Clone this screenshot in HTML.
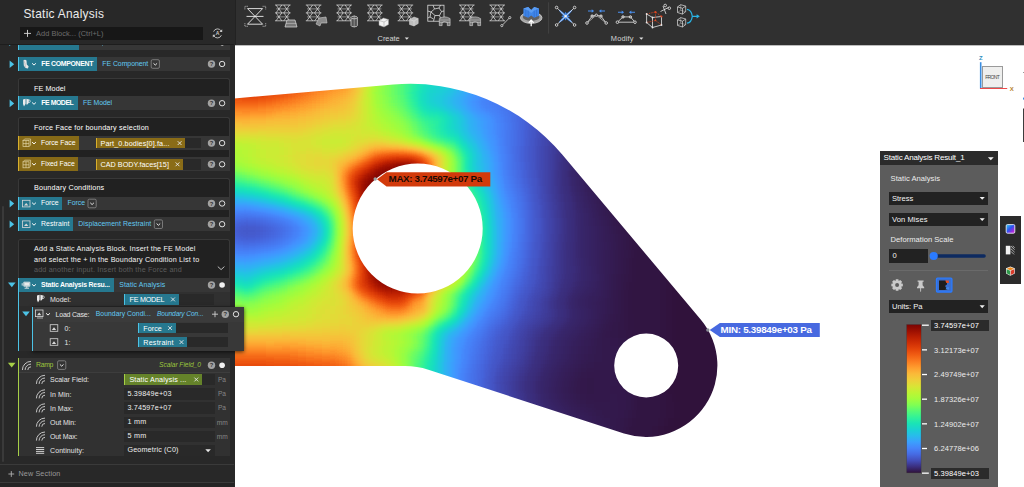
<!DOCTYPE html>
<html><head><meta charset="utf-8"><title>Static Analysis</title>
<style>
html,body{margin:0;padding:0;}
body{width:1024px;height:487px;overflow:hidden;background:#fff;position:relative;font-family:"Liberation Sans",sans-serif;}
.b{position:absolute;box-sizing:border-box;}
.t{position:absolute;white-space:nowrap;line-height:1;}
svg{overflow:visible;}
</style></head><body>
<svg class="b" style="left:0.00px;top:0.00px;" width="1024" height="487" viewBox="0 0 1024 487"><defs><filter id="tf" x="214" y="62" width="532" height="398" filterUnits="userSpaceOnUse" color-interpolation-filters="sRGB"><feGaussianBlur stdDeviation="4.5"/><feComponentTransfer><feFuncR type="table" tableValues="0.190 0.190 0.190 0.190 0.195 0.195 0.200 0.204 0.209 0.213 0.217 0.221 0.229 0.232 0.239 0.245 0.251 0.256 0.261 0.267 0.270 0.273 0.276 0.277 0.277 0.275 0.273 0.263 0.249 0.227 0.200 0.179 0.145 0.122 0.104 0.093 0.097 0.120 0.163 0.221 0.290 0.366 0.443 0.533 0.599 0.664 0.726 0.786 0.841 0.891 0.939 0.969 0.990 0.997 0.992 0.975 0.950 0.916 0.874 0.816 0.746 0.664 0.583 0.480"/><feFuncG type="table" tableValues="0.072 0.072 0.072 0.072 0.083 0.083 0.095 0.107 0.118 0.129 0.141 0.152 0.175 0.186 0.208 0.230 0.252 0.274 0.296 0.328 0.349 0.380 0.411 0.441 0.472 0.501 0.530 0.570 0.599 0.639 0.678 0.707 0.754 0.789 0.822 0.859 0.885 0.912 0.936 0.957 0.974 0.987 0.996 0.999 0.996 0.985 0.965 0.936 0.900 0.858 0.804 0.755 0.694 0.621 0.540 0.457 0.377 0.305 0.245 0.185 0.131 0.084 0.049 0.016"/><feFuncB type="table" tableValues="0.232 0.232 0.232 0.232 0.261 0.261 0.290 0.318 0.346 0.373 0.400 0.426 0.476 0.500 0.547 0.591 0.634 0.674 0.712 0.764 0.796 0.840 0.879 0.913 0.942 0.966 0.985 0.998 0.998 0.989 0.968 0.948 0.905 0.866 0.824 0.772 0.733 0.687 0.631 0.569 0.503 0.437 0.373 0.306 0.260 0.224 0.206 0.203 0.209 0.219 0.227 0.227 0.210 0.183 0.149 0.113 0.079 0.051 0.033 0.018 0.009 0.004 0.005 0.011"/><feFuncA type="linear" slope="0" intercept="1"/></feComponentTransfer></filter><clipPath id="cp"><path clip-rule="evenodd" d="M226 99.2L393.3 84.6A198.4 198.4 0 0 1 562.2 154.5L700.7 319.5A71.5 71.5 0 0 1 624 433.5L428.4 369.7Q417 366 405 366L226 366ZM482.7 228.5A65 65 0 1 0 352.7 228.5A65 65 0 1 0 482.7 228.5ZM678.2 365.5A32 32 0 1 0 614.2 365.5A32 32 0 1 0 678.2 365.5Z"/></clipPath></defs><g clip-path="url(#cp)"><g filter="url(#tf)"><path fill="#030303" d="M738 434h8v8h-8z"/><path fill="#040404" d="M738 146h8v8h-8zM738 154h8v8h-8zM738 162h8v8h-8zM738 170h8v8h-8zM738 194h8v8h-8zM738 218h8v8h-8zM738 226h8v8h-8zM738 250h8v8h-8zM738 282h8v8h-8zM738 314h8v8h-8zM738 338h8v8h-8zM738 346h8v8h-8zM738 362h8v8h-8zM738 370h8v8h-8zM738 378h8v8h-8zM738 394h8v8h-8zM738 402h8v8h-8zM738 410h8v8h-8zM738 418h8v8h-8zM738 426h8v8h-8zM738 442h8v8h-8zM738 450h8v8h-8z"/><path fill="#050505" d="M738 138h8v8h-8zM738 178h8v8h-8zM738 186h8v8h-8zM738 202h8v8h-8zM738 210h8v8h-8zM738 234h8v8h-8zM738 242h8v8h-8zM738 258h8v8h-8zM738 266h8v8h-8zM738 274h8v8h-8zM738 290h8v8h-8zM738 298h8v8h-8zM738 306h8v8h-8zM738 322h8v8h-8zM738 330h8v8h-8zM738 354h8v8h-8zM738 386h8v8h-8z"/><path fill="#070707" d="M738 130h8v8h-8zM730 146h8v8h-8zM730 154h8v8h-8zM730 162h8v8h-8zM730 170h8v8h-8zM730 178h8v8h-8zM730 186h8v8h-8zM730 194h8v8h-8zM730 202h8v8h-8zM730 210h8v8h-8zM730 218h8v8h-8zM730 226h8v8h-8zM730 234h8v8h-8zM730 242h8v8h-8zM730 250h8v8h-8zM730 258h8v8h-8zM730 266h8v8h-8zM730 274h8v8h-8zM730 282h8v8h-8zM730 290h8v8h-8zM730 298h8v8h-8zM730 306h8v8h-8zM730 314h8v8h-8zM730 322h8v8h-8zM730 330h8v8h-8zM730 338h8v8h-8zM730 346h8v8h-8zM730 354h8v8h-8zM730 362h8v8h-8zM730 370h8v8h-8zM730 378h8v8h-8zM730 386h8v8h-8zM730 394h8v8h-8zM730 418h8v8h-8zM730 426h8v8h-8zM706 434h16v8h-16zM730 434h8v8h-8zM730 442h8v8h-8z"/><path fill="#080808" d="M730 138h8v8h-8zM706 146h24v8h-24zM698 154h32v8h-32zM698 162h32v8h-32zM698 170h32v8h-32zM706 178h24v8h-24zM714 186h16v8h-16zM714 194h16v8h-16zM706 202h24v8h-24zM706 210h24v8h-24zM706 218h24v8h-24zM706 226h24v8h-24zM706 234h24v8h-24zM706 242h24v8h-24zM706 250h24v8h-24zM706 258h24v8h-24zM706 266h24v8h-24zM706 274h24v8h-24zM706 282h24v8h-24zM706 290h24v8h-24zM706 298h24v8h-24zM706 306h24v8h-24zM706 314h24v8h-24zM706 322h24v8h-24zM706 330h24v8h-24zM706 338h24v8h-24zM706 346h24v8h-24zM706 354h24v8h-24zM706 362h24v8h-24zM706 370h24v8h-24zM706 378h24v8h-24zM706 386h24v8h-24zM714 394h16v8h-16zM722 402h16v8h-16zM722 410h16v8h-16zM706 418h24v8h-24zM698 426h32v8h-32zM690 434h16v8h-16zM722 434h8v8h-8zM698 442h32v8h-32zM730 450h8v8h-8z"/><path fill="#090909" d="M738 122h8v8h-8zM722 138h8v8h-8zM698 146h8v8h-8zM690 154h8v8h-8zM690 162h8v8h-8zM690 170h8v8h-8zM698 178h8v8h-8zM698 186h16v8h-16zM698 194h16v8h-16zM698 202h8v8h-8zM698 210h8v8h-8zM698 218h8v8h-8zM698 226h8v8h-8zM698 234h8v8h-8zM698 242h8v8h-8zM698 250h8v8h-8zM698 258h8v8h-8zM698 266h8v8h-8zM698 274h8v8h-8zM698 282h8v8h-8zM698 290h8v8h-8zM698 298h8v8h-8zM698 306h8v8h-8zM698 314h8v8h-8zM698 322h8v8h-8zM698 330h8v8h-8zM698 338h8v8h-8zM698 346h8v8h-8zM698 354h8v8h-8zM698 362h8v8h-8zM698 370h8v8h-8zM698 378h8v8h-8zM698 386h8v8h-8zM698 394h16v8h-16zM698 402h24v8h-24zM698 410h24v8h-24zM698 418h8v8h-8zM690 426h8v8h-8zM690 442h8v8h-8zM706 450h24v8h-24z"/><path fill="#0a0a0a" d="M730 130h8v8h-8zM706 138h16v8h-16zM690 146h8v8h-8zM682 154h8v8h-8zM682 162h8v8h-8zM690 178h8v8h-8zM690 186h8v8h-8zM690 194h8v8h-8zM690 202h8v8h-8zM690 210h8v8h-8zM690 218h8v8h-8zM690 226h8v8h-8zM690 234h8v8h-8zM690 242h8v8h-8zM690 250h8v8h-8zM690 258h8v8h-8zM690 266h8v8h-8zM690 274h8v8h-8zM690 282h8v8h-8zM690 290h8v8h-8zM690 298h8v8h-8zM690 306h8v8h-8zM690 314h8v8h-8zM690 322h8v8h-8zM690 330h8v8h-8zM690 338h8v8h-8zM690 346h8v8h-8zM690 354h8v8h-8zM690 362h8v8h-8zM690 370h8v8h-8zM690 378h8v8h-8zM690 386h8v8h-8zM690 394h8v8h-8zM690 402h8v8h-8zM690 410h8v8h-8zM690 418h8v8h-8zM682 426h8v8h-8zM682 434h8v8h-8zM682 442h8v8h-8zM698 450h8v8h-8z"/><path fill="#0b0b0b" d="M722 130h8v8h-8zM698 138h8v8h-8zM682 146h8v8h-8zM682 170h8v8h-8zM682 178h8v8h-8zM682 186h8v8h-8zM682 194h8v8h-8zM682 202h8v8h-8zM682 210h8v8h-8zM682 218h8v8h-8zM682 226h8v8h-8zM682 234h8v8h-8zM682 242h8v8h-8zM682 250h8v8h-8zM682 258h8v8h-8zM682 266h8v8h-8zM682 274h8v8h-8zM682 282h8v8h-8zM682 290h8v8h-8zM682 298h8v8h-8zM682 306h8v8h-8zM682 314h8v8h-8zM682 322h8v8h-8zM682 330h8v8h-8zM682 338h8v8h-8zM682 346h8v8h-8zM682 354h8v8h-8zM682 362h8v8h-8zM682 370h8v8h-8zM682 378h8v8h-8zM682 386h8v8h-8zM682 394h8v8h-8zM682 402h8v8h-8zM682 410h8v8h-8zM682 418h8v8h-8zM674 426h8v8h-8zM674 434h8v8h-8zM674 442h8v8h-8zM690 450h8v8h-8z"/><path fill="#0c0c0c" d="M738 114h8v8h-8zM730 122h8v8h-8zM714 130h8v8h-8zM690 138h8v8h-8zM674 146h8v8h-8zM674 154h8v8h-8zM674 162h8v8h-8zM674 170h8v8h-8zM674 210h8v8h-8zM674 218h8v8h-8zM674 226h8v8h-8zM674 234h8v8h-8zM674 242h8v8h-8zM674 250h8v8h-8zM674 258h8v8h-8zM674 266h8v8h-8zM674 274h8v8h-8zM674 282h8v8h-8zM674 290h8v8h-8zM674 298h8v8h-8zM674 306h8v8h-8zM674 314h8v8h-8zM674 322h8v8h-8zM674 330h8v8h-8zM674 338h8v8h-8zM674 346h8v8h-8zM674 354h8v8h-8zM674 362h8v8h-8zM674 370h8v8h-8zM674 378h8v8h-8zM674 386h8v8h-8zM674 394h8v8h-8zM674 418h8v8h-8zM666 426h8v8h-8zM666 434h8v8h-8zM666 442h8v8h-8z"/><path fill="#0d0d0d" d="M722 122h8v8h-8zM706 130h8v8h-8zM682 138h8v8h-8zM666 154h8v8h-8zM666 162h8v8h-8zM674 178h8v8h-8zM674 186h8v8h-8zM674 194h8v8h-8zM674 202h8v8h-8zM666 354h8v8h-8zM666 362h8v8h-8zM666 370h8v8h-8zM666 378h8v8h-8zM666 386h8v8h-8zM674 402h8v8h-8zM674 410h8v8h-8zM666 418h8v8h-8zM658 434h8v8h-8zM682 450h8v8h-8z"/><path fill="#0e0e0e" d="M738 106h8v8h-8zM730 114h8v8h-8zM698 130h8v8h-8zM674 138h8v8h-8zM666 146h8v8h-8zM666 170h8v8h-8zM666 178h8v8h-8zM666 186h8v8h-8zM666 194h8v8h-8zM666 202h8v8h-8zM666 210h8v8h-8zM666 218h8v8h-8zM666 226h8v8h-8zM666 234h8v8h-8zM666 242h8v8h-8zM666 250h8v8h-8zM666 258h8v8h-8zM666 266h8v8h-8zM666 274h8v8h-8zM666 282h8v8h-8zM666 290h8v8h-8zM666 298h8v8h-8zM666 306h8v8h-8zM666 314h8v8h-8zM666 322h8v8h-8zM666 330h8v8h-8zM666 338h8v8h-8zM666 346h8v8h-8zM666 394h8v8h-8zM666 402h8v8h-8zM666 410h8v8h-8zM658 426h8v8h-8zM658 442h8v8h-8zM674 450h8v8h-8z"/><path fill="#0f0f0f" d="M714 122h8v8h-8zM690 130h8v8h-8zM658 154h8v8h-8zM658 162h8v8h-8zM658 170h8v8h-8zM658 218h8v8h-8zM658 226h8v8h-8zM658 234h8v8h-8zM658 242h8v8h-8zM658 250h8v8h-8zM658 258h8v8h-8zM658 266h8v8h-8zM658 274h8v8h-8zM658 282h8v8h-8zM658 290h8v8h-8zM658 298h8v8h-8zM658 306h8v8h-8zM658 314h8v8h-8zM658 322h8v8h-8zM658 330h8v8h-8zM658 338h8v8h-8zM658 346h8v8h-8zM658 354h8v8h-8zM658 362h8v8h-8zM658 370h8v8h-8zM658 378h8v8h-8zM658 386h8v8h-8zM658 394h8v8h-8zM658 402h8v8h-8zM658 410h8v8h-8zM658 418h8v8h-8zM650 426h8v8h-8zM650 434h8v8h-8zM650 442h8v8h-8zM666 450h8v8h-8z"/><path fill="#101010" d="M722 114h8v8h-8zM706 122h8v8h-8zM682 130h8v8h-8zM666 138h8v8h-8zM658 146h8v8h-8zM650 154h8v8h-8zM650 162h8v8h-8zM658 178h8v8h-8zM658 186h8v8h-8zM658 194h8v8h-8zM658 202h8v8h-8zM658 210h8v8h-8zM650 354h8v8h-8zM650 362h8v8h-8zM650 378h8v8h-8zM650 386h8v8h-8zM650 418h8v8h-8zM658 450h8v8h-8z"/><path fill="#111111" d="M738 98h8v8h-8zM730 106h8v8h-8zM714 114h8v8h-8zM698 122h8v8h-8zM674 130h8v8h-8zM658 138h8v8h-8zM650 146h8v8h-8zM642 154h8v8h-8zM634 162h16v8h-16zM634 170h24v8h-24zM650 178h8v8h-8zM650 186h8v8h-8zM650 194h8v8h-8zM650 202h8v8h-8zM650 210h8v8h-8zM650 218h8v8h-8zM650 226h8v8h-8zM650 234h8v8h-8zM650 242h8v8h-8zM650 250h8v8h-8zM650 258h8v8h-8zM650 266h8v8h-8zM650 274h8v8h-8zM650 282h8v8h-8zM650 290h8v8h-8zM650 298h8v8h-8zM650 306h8v8h-8zM650 314h8v8h-8zM650 322h8v8h-8zM650 330h8v8h-8zM650 338h8v8h-8zM650 346h8v8h-8zM650 370h8v8h-8zM650 394h8v8h-8zM650 402h8v8h-8zM650 410h8v8h-8zM642 426h8v8h-8zM642 434h8v8h-8z"/><path fill="#121212" d="M706 114h8v8h-8zM690 122h8v8h-8zM666 130h8v8h-8zM642 146h8v8h-8zM634 154h8v8h-8zM626 162h8v8h-8zM626 170h8v8h-8zM626 178h24v8h-24zM626 186h24v8h-24zM634 194h16v8h-16zM642 202h8v8h-8zM642 210h8v8h-8zM642 218h8v8h-8zM642 226h8v8h-8zM642 234h8v8h-8zM642 242h8v8h-8zM642 250h8v8h-8zM642 258h8v8h-8zM642 266h8v8h-8zM642 274h8v8h-8zM642 282h8v8h-8zM642 290h8v8h-8zM642 298h8v8h-8zM642 306h8v8h-8zM642 314h8v8h-8zM642 322h8v8h-8zM642 330h8v8h-8zM642 418h8v8h-8zM642 442h8v8h-8zM650 450h8v8h-8z"/><path fill="#131313" d="M722 106h8v8h-8zM682 122h8v8h-8zM650 138h8v8h-8zM634 146h8v8h-8zM626 154h8v8h-8zM618 162h8v8h-8zM618 170h8v8h-8zM618 178h8v8h-8zM618 186h8v8h-8zM626 194h8v8h-8zM634 202h8v8h-8zM634 210h8v8h-8zM634 290h8v8h-8zM634 298h8v8h-8zM634 306h8v8h-8zM642 338h8v8h-8zM642 346h8v8h-8zM642 354h8v8h-8zM642 362h8v8h-8zM642 370h8v8h-8zM642 378h8v8h-8zM642 386h8v8h-8zM642 394h8v8h-8zM642 402h8v8h-8zM642 410h8v8h-8zM634 426h8v8h-8zM634 434h8v8h-8z"/><path fill="#141414" d="M738 90h8v8h-8zM730 98h8v8h-8zM714 106h8v8h-8zM698 114h8v8h-8zM674 122h8v8h-8zM658 130h8v8h-8zM642 138h8v8h-8zM618 154h8v8h-8zM610 170h8v8h-8zM610 178h8v8h-8zM618 194h8v8h-8zM626 202h8v8h-8zM626 210h8v8h-8zM634 218h8v8h-8zM634 226h8v8h-8zM634 234h8v8h-8zM634 242h8v8h-8zM634 250h8v8h-8zM634 258h8v8h-8zM634 266h8v8h-8zM634 274h8v8h-8zM634 282h8v8h-8zM634 314h8v8h-8zM634 322h8v8h-8zM634 330h8v8h-8zM634 418h8v8h-8z"/><path fill="#151515" d="M690 114h8v8h-8zM666 122h8v8h-8zM650 130h8v8h-8zM634 138h8v8h-8zM626 146h8v8h-8zM610 162h8v8h-8zM610 186h8v8h-8zM618 202h8v8h-8zM626 218h8v8h-8zM626 282h8v8h-8zM626 290h8v8h-8zM626 298h8v8h-8zM626 306h8v8h-8zM626 314h8v8h-8zM626 322h8v8h-8zM634 338h8v8h-8zM634 346h8v8h-8zM634 354h8v8h-8zM634 378h8v8h-8zM634 386h8v8h-8zM634 394h8v8h-8zM634 402h8v8h-8zM634 410h8v8h-8zM626 426h8v8h-8zM634 442h8v8h-8zM642 450h8v8h-8z"/><path fill="#161616" d="M722 98h8v8h-8zM706 106h8v8h-8zM682 114h8v8h-8zM642 130h8v8h-8zM618 146h8v8h-8zM610 154h8v8h-8zM610 194h8v8h-8zM618 210h8v8h-8zM626 226h8v8h-8zM626 234h8v8h-8zM626 242h8v8h-8zM626 258h8v8h-8zM626 266h8v8h-8zM626 274h8v8h-8zM626 330h8v8h-8zM634 362h8v8h-8zM634 370h8v8h-8zM626 418h8v8h-8zM626 434h8v8h-8z"/><path fill="#171717" d="M730 90h8v8h-8zM714 98h8v8h-8zM698 106h8v8h-8zM674 114h8v8h-8zM658 122h8v8h-8zM626 138h8v8h-8zM602 170h8v8h-8zM602 178h8v8h-8zM618 218h8v8h-8zM626 250h8v8h-8zM618 290h8v8h-8zM618 298h8v8h-8zM618 306h8v8h-8zM618 314h8v8h-8zM618 322h8v8h-8zM618 330h8v8h-8zM626 338h8v8h-8zM626 410h8v8h-8z"/><path fill="#181818" d="M738 82h8v8h-8zM690 106h8v8h-8zM666 114h8v8h-8zM650 122h8v8h-8zM634 130h8v8h-8zM602 162h8v8h-8zM602 186h8v8h-8zM610 202h8v8h-8zM618 226h8v8h-8zM618 274h8v8h-8zM618 282h8v8h-8zM610 322h8v8h-8zM610 330h8v8h-8zM618 338h8v8h-8zM626 346h8v8h-8zM626 354h8v8h-8zM626 362h8v8h-8zM626 370h8v8h-8zM586 378h8v8h-8zM626 378h8v8h-8zM586 386h8v8h-8zM626 386h8v8h-8zM626 394h8v8h-8zM626 402h8v8h-8zM618 418h8v8h-8zM618 426h8v8h-8zM618 434h8v8h-8zM626 442h8v8h-8zM634 450h8v8h-8z"/><path fill="#191919" d="M722 90h8v8h-8zM706 98h8v8h-8zM682 106h8v8h-8zM618 138h8v8h-8zM610 146h8v8h-8zM602 154h8v8h-8zM602 194h8v8h-8zM610 210h8v8h-8zM618 234h8v8h-8zM618 242h8v8h-8zM618 250h8v8h-8zM618 258h8v8h-8zM618 266h8v8h-8zM610 314h8v8h-8zM602 330h8v8h-8zM610 338h8v8h-8zM618 346h8v8h-8zM618 354h8v8h-8zM618 362h8v8h-8zM586 370h24v8h-24zM618 370h8v8h-8zM578 378h8v8h-8zM594 378h16v8h-16zM618 378h8v8h-8zM578 386h8v8h-8zM594 386h32v8h-32zM586 394h24v8h-24zM618 394h8v8h-8zM618 402h8v8h-8zM618 410h8v8h-8z"/><path fill="#1a1a1a" d="M730 82h8v8h-8zM714 90h8v8h-8zM698 98h8v8h-8zM674 106h8v8h-8zM658 114h8v8h-8zM642 122h8v8h-8zM626 130h8v8h-8zM594 170h8v8h-8zM610 218h8v8h-8zM610 290h8v8h-8zM610 298h8v8h-8zM610 306h8v8h-8zM602 322h8v8h-8zM602 338h8v8h-8zM602 346h16v8h-16zM602 354h16v8h-16zM594 362h24v8h-24zM578 370h8v8h-8zM610 370h8v8h-8zM610 378h8v8h-8zM578 394h8v8h-8zM610 394h8v8h-8zM594 402h24v8h-24zM602 410h16v8h-16zM610 418h8v8h-8zM610 426h8v8h-8z"/><path fill="#1b1b1b" d="M738 74h8v8h-8zM690 98h8v8h-8zM650 114h8v8h-8zM634 122h8v8h-8zM610 138h8v8h-8zM594 162h8v8h-8zM594 178h8v8h-8zM602 202h8v8h-8zM610 226h8v8h-8zM610 274h8v8h-8zM610 282h8v8h-8zM594 338h8v8h-8zM594 346h8v8h-8zM594 354h8v8h-8zM586 362h8v8h-8zM570 378h8v8h-8zM570 386h8v8h-8zM586 402h8v8h-8zM594 410h8v8h-8zM602 418h8v8h-8zM610 434h8v8h-8zM618 442h8v8h-8zM626 450h8v8h-8z"/><path fill="#1c1c1c" d="M722 82h8v8h-8zM706 90h8v8h-8zM666 106h8v8h-8zM618 130h8v8h-8zM602 146h8v8h-8zM594 186h8v8h-8zM602 210h8v8h-8zM610 234h8v8h-8zM610 242h8v8h-8zM610 250h8v8h-8zM610 258h8v8h-8zM610 266h8v8h-8zM602 314h8v8h-8zM594 330h8v8h-8zM586 354h8v8h-8zM578 362h8v8h-8zM570 394h8v8h-8zM578 402h8v8h-8z"/><path fill="#1d1d1d" d="M730 74h8v8h-8zM698 90h8v8h-8zM682 98h8v8h-8zM658 106h8v8h-8zM642 114h8v8h-8zM626 122h8v8h-8zM594 154h8v8h-8zM594 194h8v8h-8zM602 298h8v8h-8zM602 306h8v8h-8zM586 346h8v8h-8zM570 370h8v8h-8zM586 410h8v8h-8zM594 418h8v8h-8zM602 426h8v8h-8z"/><path fill="#1e1e1e" d="M738 66h8v8h-8zM714 82h8v8h-8zM674 98h8v8h-8zM602 138h8v8h-8zM602 218h8v8h-8zM602 290h8v8h-8zM594 322h8v8h-8zM586 338h8v8h-8zM578 354h8v8h-8zM562 386h8v8h-8zM570 402h8v8h-8zM610 442h8v8h-8zM618 450h8v8h-8z"/><path fill="#1f1f1f" d="M722 74h8v8h-8zM706 82h8v8h-8zM690 90h8v8h-8zM666 98h8v8h-8zM650 106h8v8h-8zM634 114h8v8h-8zM618 122h8v8h-8zM610 130h8v8h-8zM594 146h8v8h-8zM586 170h8v8h-8zM586 178h8v8h-8zM594 202h8v8h-8zM602 226h8v8h-8zM602 234h8v8h-8zM602 250h8v8h-8zM602 258h8v8h-8zM602 266h8v8h-8zM602 274h8v8h-8zM602 282h8v8h-8zM586 330h8v8h-8zM578 346h8v8h-8zM570 362h8v8h-8zM562 378h8v8h-8zM562 394h8v8h-8zM578 410h8v8h-8zM586 418h8v8h-8zM594 426h8v8h-8zM602 434h8v8h-8z"/><path fill="#202020" d="M730 66h8v8h-8zM682 90h8v8h-8zM586 162h8v8h-8zM586 186h8v8h-8zM594 210h8v8h-8zM602 242h8v8h-8zM594 298h8v8h-8zM594 306h8v8h-8zM594 314h8v8h-8zM578 338h8v8h-8zM562 370h8v8h-8z"/><path fill="#212121" d="M714 74h8v8h-8zM698 82h8v8h-8zM658 98h8v8h-8zM642 106h8v8h-8zM626 114h8v8h-8zM586 154h8v8h-8zM570 354h8v8h-8zM570 410h8v8h-8z"/><path fill="#222222" d="M722 66h8v8h-8zM690 82h8v8h-8zM674 90h8v8h-8zM634 106h8v8h-8zM610 122h8v8h-8zM602 130h8v8h-8zM594 138h8v8h-8zM586 194h8v8h-8zM594 218h8v8h-8zM594 290h8v8h-8zM586 298h8v8h-8zM586 322h8v8h-8zM578 330h8v8h-8zM570 346h8v8h-8zM562 362h8v8h-8zM554 378h8v8h-8zM554 386h8v8h-8zM562 402h8v8h-8zM578 418h8v8h-8zM586 426h8v8h-8zM594 434h8v8h-8zM602 442h8v8h-8zM610 450h8v8h-8z"/><path fill="#232323" d="M706 74h8v8h-8zM666 90h8v8h-8zM650 98h8v8h-8zM618 114h8v8h-8zM586 146h8v8h-8zM594 226h8v8h-8zM594 234h8v8h-8zM594 242h8v8h-8zM594 250h8v8h-8zM594 258h8v8h-8zM594 266h8v8h-8zM594 282h8v8h-8zM570 338h8v8h-8zM554 394h8v8h-8z"/><path fill="#242424" d="M714 66h8v8h-8zM698 74h8v8h-8zM682 82h8v8h-8zM642 98h8v8h-8zM626 106h8v8h-8zM578 170h8v8h-8zM586 202h8v8h-8zM594 274h8v8h-8zM586 290h8v8h-8zM578 298h8v8h-8zM586 306h8v8h-8zM586 314h8v8h-8zM554 370h8v8h-8z"/><path fill="#252525" d="M674 82h8v8h-8zM658 90h8v8h-8zM602 122h8v8h-8zM594 130h8v8h-8zM578 162h8v8h-8zM578 178h8v8h-8zM578 322h8v8h-8zM562 354h8v8h-8zM554 402h8v8h-8zM562 410h8v8h-8zM570 418h8v8h-8zM578 426h8v8h-8zM586 434h8v8h-8z"/><path fill="#262626" d="M706 66h8v8h-8zM690 74h8v8h-8zM650 90h8v8h-8zM634 98h8v8h-8zM610 114h8v8h-8zM586 138h8v8h-8zM578 154h8v8h-8zM578 186h8v8h-8zM586 210h8v8h-8zM586 218h8v8h-8zM570 330h8v8h-8zM562 346h8v8h-8zM554 362h8v8h-8zM546 386h8v8h-8zM594 442h8v8h-8zM602 450h8v8h-8z"/><path fill="#272727" d="M682 74h8v8h-8zM666 82h8v8h-8zM618 106h8v8h-8zM586 226h8v8h-8zM586 234h8v8h-8zM586 242h8v8h-8zM586 250h8v8h-8zM586 258h8v8h-8zM586 282h8v8h-8zM578 290h8v8h-8zM578 306h8v8h-8zM562 338h8v8h-8zM546 378h8v8h-8zM546 394h8v8h-8z"/><path fill="#282828" d="M698 66h8v8h-8zM658 82h8v8h-8zM642 90h8v8h-8zM626 98h8v8h-8zM602 114h8v8h-8zM594 122h8v8h-8zM578 146h8v8h-8zM578 194h8v8h-8zM586 266h8v8h-8zM586 274h8v8h-8zM578 314h8v8h-8zM546 370h8v8h-8zM562 418h8v8h-8z"/><path fill="#292929" d="M690 66h8v8h-8zM674 74h8v8h-8zM610 106h8v8h-8zM586 130h8v8h-8zM578 202h8v8h-8zM570 298h8v8h-8zM570 322h8v8h-8zM562 330h8v8h-8zM554 354h8v8h-8zM554 410h8v8h-8zM570 426h8v8h-8zM578 434h8v8h-8zM586 442h8v8h-8z"/><path fill="#2a2a2a" d="M666 74h8v8h-8zM650 82h8v8h-8zM634 90h8v8h-8zM570 170h8v8h-8zM554 346h8v8h-8zM546 402h8v8h-8zM594 450h8v8h-8z"/><path fill="#2b2b2b" d="M682 66h8v8h-8zM618 98h8v8h-8zM578 138h8v8h-8zM570 162h8v8h-8zM570 178h8v8h-8zM578 210h8v8h-8zM578 218h8v8h-8zM578 226h8v8h-8zM578 234h8v8h-8zM578 242h8v8h-8zM578 250h8v8h-8zM578 282h8v8h-8zM570 306h8v8h-8zM570 314h8v8h-8zM554 338h8v8h-8zM546 362h8v8h-8zM538 378h8v8h-8zM538 386h8v8h-8z"/><path fill="#2c2c2c" d="M658 74h8v8h-8zM642 82h8v8h-8zM626 90h8v8h-8zM602 106h8v8h-8zM594 114h8v8h-8zM586 122h8v8h-8zM570 154h8v8h-8zM570 186h8v8h-8zM578 258h8v8h-8zM578 266h8v8h-8zM578 274h8v8h-8zM570 290h8v8h-8zM538 394h8v8h-8zM554 418h8v8h-8z"/><path fill="#2d2d2d" d="M674 66h8v8h-8zM610 98h8v8h-8zM562 322h8v8h-8zM554 330h8v8h-8zM546 354h8v8h-8zM538 370h8v8h-8zM546 410h8v8h-8zM562 426h8v8h-8zM570 434h8v8h-8zM578 442h8v8h-8z"/><path fill="#2e2e2e" d="M666 66h8v8h-8zM650 74h8v8h-8zM634 82h8v8h-8zM618 90h8v8h-8zM578 130h8v8h-8zM570 146h8v8h-8zM570 194h8v8h-8zM546 346h8v8h-8zM538 402h8v8h-8zM586 450h8v8h-8z"/><path fill="#2f2f2f" d="M594 106h8v8h-8zM586 114h8v8h-8zM570 202h8v8h-8zM570 282h8v8h-8zM562 298h8v8h-8zM546 338h8v8h-8zM538 362h8v8h-8z"/><path fill="#303030" d="M658 66h8v8h-8zM642 74h8v8h-8zM626 82h8v8h-8zM602 98h8v8h-8zM578 122h8v8h-8zM570 138h8v8h-8zM570 210h8v8h-8zM570 218h8v8h-8zM570 226h8v8h-8zM570 234h8v8h-8zM570 242h8v8h-8zM570 250h8v8h-8zM570 258h8v8h-8zM570 274h8v8h-8zM562 306h8v8h-8zM562 314h8v8h-8zM530 378h8v8h-8zM530 386h8v8h-8z"/><path fill="#313131" d="M610 90h8v8h-8zM562 170h8v8h-8zM570 266h8v8h-8zM562 290h8v8h-8zM554 322h8v8h-8zM546 330h8v8h-8zM538 354h8v8h-8zM530 394h8v8h-8zM546 418h8v8h-8zM554 426h8v8h-8zM562 434h8v8h-8zM570 442h8v8h-8z"/><path fill="#323232" d="M650 66h8v8h-8zM634 74h8v8h-8zM618 82h8v8h-8zM562 162h8v8h-8zM562 178h8v8h-8zM530 370h8v8h-8zM538 410h8v8h-8zM578 450h8v8h-8z"/><path fill="#333333" d="M594 98h8v8h-8zM586 106h8v8h-8zM578 114h8v8h-8zM570 130h8v8h-8zM562 154h8v8h-8zM562 186h8v8h-8zM562 282h8v8h-8zM538 346h8v8h-8zM530 402h8v8h-8z"/><path fill="#343434" d="M642 66h8v8h-8zM626 74h8v8h-8zM602 90h8v8h-8zM562 146h8v8h-8zM562 194h8v8h-8zM554 298h8v8h-8zM538 338h8v8h-8zM530 362h8v8h-8z"/><path fill="#353535" d="M610 82h8v8h-8zM570 122h8v8h-8zM562 202h8v8h-8zM562 210h8v8h-8zM562 242h8v8h-8zM562 250h8v8h-8zM562 258h8v8h-8zM562 266h8v8h-8zM562 274h8v8h-8zM522 378h8v8h-8zM522 386h8v8h-8zM546 426h8v8h-8zM554 434h8v8h-8z"/><path fill="#363636" d="M634 66h8v8h-8zM618 74h8v8h-8zM586 98h8v8h-8zM562 138h8v8h-8zM562 218h8v8h-8zM562 226h8v8h-8zM562 234h8v8h-8zM554 306h8v8h-8zM554 314h8v8h-8zM546 322h8v8h-8zM538 330h8v8h-8zM530 354h8v8h-8zM522 394h8v8h-8zM538 418h8v8h-8zM562 442h8v8h-8zM570 450h8v8h-8z"/><path fill="#373737" d="M594 90h8v8h-8zM578 106h8v8h-8zM554 290h8v8h-8zM522 370h8v8h-8zM530 410h8v8h-8z"/><path fill="#383838" d="M626 66h8v8h-8zM602 82h8v8h-8zM570 114h8v8h-8zM562 130h8v8h-8zM530 346h8v8h-8z"/><path fill="#393939" d="M610 74h8v8h-8zM554 170h8v8h-8zM554 178h8v8h-8zM554 186h8v8h-8zM554 282h8v8h-8zM546 298h8v8h-8zM530 338h8v8h-8zM522 402h8v8h-8z"/><path fill="#3a3a3a" d="M618 66h8v8h-8zM594 82h8v8h-8zM586 90h8v8h-8zM578 98h8v8h-8zM562 122h8v8h-8zM554 154h8v8h-8zM554 162h8v8h-8zM554 194h8v8h-8zM554 274h8v8h-8zM522 362h8v8h-8zM514 378h8v8h-8zM514 386h8v8h-8zM538 426h8v8h-8zM546 434h8v8h-8zM554 442h8v8h-8zM562 450h8v8h-8z"/><path fill="#3b3b3b" d="M570 106h8v8h-8zM554 146h8v8h-8zM554 202h8v8h-8zM554 250h8v8h-8zM554 258h8v8h-8zM554 266h8v8h-8zM546 306h8v8h-8zM546 314h8v8h-8zM538 322h8v8h-8zM530 330h8v8h-8zM530 418h8v8h-8z"/><path fill="#3c3c3c" d="M602 74h8v8h-8zM562 114h8v8h-8zM554 138h8v8h-8zM554 210h8v8h-8zM554 234h8v8h-8zM554 242h8v8h-8zM522 354h8v8h-8zM514 370h8v8h-8zM514 394h8v8h-8zM522 410h8v8h-8z"/><path fill="#3d3d3d" d="M610 66h8v8h-8zM578 90h8v8h-8zM554 130h8v8h-8zM554 218h8v8h-8zM554 226h8v8h-8z"/><path fill="#3e3e3e" d="M594 74h8v8h-8zM586 82h8v8h-8zM570 98h8v8h-8zM522 346h8v8h-8zM514 402h8v8h-8z"/><path fill="#3f3f3f" d="M602 66h8v8h-8zM562 106h8v8h-8zM554 122h8v8h-8zM546 290h8v8h-8zM538 314h8v8h-8zM530 322h8v8h-8zM522 338h8v8h-8zM514 362h8v8h-8zM538 434h8v8h-8zM546 442h8v8h-8zM554 450h8v8h-8z"/><path fill="#404040" d="M546 178h8v8h-8zM546 282h8v8h-8zM522 330h8v8h-8zM506 378h8v8h-8zM506 386h8v8h-8zM522 418h8v8h-8zM530 426h8v8h-8z"/><path fill="#414141" d="M586 74h8v8h-8zM578 82h8v8h-8zM570 90h8v8h-8zM554 114h8v8h-8zM546 146h8v8h-8zM546 154h8v8h-8zM546 162h8v8h-8zM546 170h8v8h-8zM546 186h8v8h-8zM546 194h8v8h-8zM546 266h8v8h-8zM546 274h8v8h-8zM538 298h8v8h-8zM538 306h8v8h-8zM506 394h8v8h-8z"/><path fill="#424242" d="M594 66h8v8h-8zM562 98h8v8h-8zM546 138h8v8h-8zM546 250h8v8h-8zM546 258h8v8h-8zM514 354h8v8h-8zM506 370h8v8h-8zM514 410h8v8h-8z"/><path fill="#434343" d="M554 106h8v8h-8zM546 130h8v8h-8zM546 202h8v8h-8zM546 210h8v8h-8zM546 242h8v8h-8zM514 346h8v8h-8z"/><path fill="#444444" d="M578 74h8v8h-8zM570 82h8v8h-8zM546 122h8v8h-8zM546 218h8v8h-8zM546 226h8v8h-8zM546 234h8v8h-8zM530 314h8v8h-8zM522 322h8v8h-8zM514 338h8v8h-8zM506 362h8v8h-8zM506 402h8v8h-8zM530 434h8v8h-8zM538 442h8v8h-8zM546 450h8v8h-8z"/><path fill="#454545" d="M586 66h8v8h-8zM562 90h8v8h-8zM538 290h8v8h-8zM498 378h8v8h-8zM522 426h8v8h-8z"/><path fill="#464646" d="M554 98h8v8h-8zM546 114h8v8h-8zM530 306h8v8h-8zM514 330h8v8h-8zM498 386h8v8h-8zM514 418h8v8h-8z"/><path fill="#474747" d="M538 146h8v8h-8zM538 154h8v8h-8zM538 162h8v8h-8zM538 170h8v8h-8zM538 282h8v8h-8zM530 298h8v8h-8zM506 354h8v8h-8zM498 370h8v8h-8z"/><path fill="#484848" d="M578 66h8v8h-8zM570 74h8v8h-8zM562 82h8v8h-8zM554 90h8v8h-8zM546 106h8v8h-8zM538 130h8v8h-8zM538 138h8v8h-8zM538 178h8v8h-8zM538 186h8v8h-8zM538 266h8v8h-8zM538 274h8v8h-8zM522 314h8v8h-8zM506 346h8v8h-8zM498 394h8v8h-8zM506 410h8v8h-8z"/><path fill="#494949" d="M538 194h8v8h-8zM538 258h8v8h-8zM530 290h8v8h-8zM514 322h8v8h-8zM498 362h8v8h-8zM530 442h8v8h-8zM538 450h8v8h-8z"/><path fill="#4a4a4a" d="M546 98h8v8h-8zM538 122h8v8h-8zM538 202h8v8h-8zM538 242h8v8h-8zM538 250h8v8h-8zM506 338h8v8h-8zM522 434h8v8h-8z"/><path fill="#4b4b4b" d="M570 66h8v8h-8zM562 74h8v8h-8zM554 82h8v8h-8zM538 114h8v8h-8zM538 210h8v8h-8zM538 218h8v8h-8zM538 226h8v8h-8zM538 234h8v8h-8zM522 306h8v8h-8zM490 378h8v8h-8zM498 402h8v8h-8zM514 426h8v8h-8z"/><path fill="#4c4c4c" d="M546 90h8v8h-8zM538 106h8v8h-8zM530 282h8v8h-8zM522 298h8v8h-8zM506 330h8v8h-8zM498 354h8v8h-8zM490 386h8v8h-8z"/><path fill="#4d4d4d" d="M530 138h8v8h-8zM530 146h8v8h-8zM530 154h8v8h-8zM530 162h8v8h-8zM514 314h8v8h-8zM498 346h8v8h-8zM490 370h8v8h-8zM506 418h8v8h-8z"/><path fill="#4e4e4e" d="M538 98h8v8h-8zM530 130h8v8h-8zM530 170h8v8h-8zM530 274h8v8h-8zM490 394h8v8h-8z"/><path fill="#4f4f4f" d="M562 66h8v8h-8zM554 74h8v8h-8zM546 82h8v8h-8zM530 122h8v8h-8zM530 178h8v8h-8zM242 226h8v8h-8zM530 266h8v8h-8zM522 290h8v8h-8zM506 322h8v8h-8zM498 338h8v8h-8zM490 362h8v8h-8zM498 410h8v8h-8zM522 442h8v8h-8zM530 450h8v8h-8z"/><path fill="#505050" d="M538 90h8v8h-8zM530 114h8v8h-8zM530 186h8v8h-8zM250 226h8v8h-8zM530 258h8v8h-8zM514 306h8v8h-8zM514 434h8v8h-8z"/><path fill="#515151" d="M530 106h8v8h-8zM530 194h8v8h-8zM234 226h8v8h-8zM530 250h8v8h-8zM498 330h8v8h-8zM490 354h8v8h-8zM506 426h8v8h-8z"/><path fill="#525252" d="M554 66h8v8h-8zM546 74h8v8h-8zM530 98h8v8h-8zM530 202h8v8h-8zM530 210h8v8h-8zM258 226h8v8h-8zM530 234h8v8h-8zM530 242h8v8h-8zM522 282h8v8h-8zM514 298h8v8h-8zM490 402h8v8h-8z"/><path fill="#535353" d="M538 82h8v8h-8zM522 146h8v8h-8zM522 154h8v8h-8zM530 218h8v8h-8zM530 226h8v8h-8zM242 234h16v8h-16zM490 346h8v8h-8zM482 378h8v8h-8zM482 386h8v8h-8zM498 418h8v8h-8z"/><path fill="#545454" d="M530 90h8v8h-8zM522 130h8v8h-8zM522 138h8v8h-8zM522 162h8v8h-8zM522 170h8v8h-8zM234 234h8v8h-8zM522 274h8v8h-8zM506 314h8v8h-8zM490 338h8v8h-8zM482 370h8v8h-8zM522 450h8v8h-8z"/><path fill="#555555" d="M522 114h8v8h-8zM522 122h8v8h-8zM522 178h8v8h-8zM242 218h8v8h-8zM266 226h8v8h-8zM258 234h8v8h-8zM514 290h8v8h-8zM498 322h8v8h-8zM482 362h8v8h-8zM482 394h8v8h-8zM514 442h8v8h-8z"/><path fill="#565656" d="M546 66h8v8h-8zM538 74h8v8h-8zM522 98h8v8h-8zM522 106h8v8h-8zM250 218h8v8h-8zM522 266h8v8h-8zM490 330h8v8h-8zM490 410h8v8h-8zM506 434h8v8h-8z"/><path fill="#575757" d="M530 82h8v8h-8zM522 186h8v8h-8zM234 218h8v8h-8zM522 258h8v8h-8zM506 306h8v8h-8zM482 354h8v8h-8z"/><path fill="#585858" d="M522 90h8v8h-8zM522 194h8v8h-8zM258 218h8v8h-8zM226 226h8v8h-8zM274 226h8v8h-8zM266 234h8v8h-8zM522 250h8v8h-8zM514 282h8v8h-8zM482 346h8v8h-8zM498 426h8v8h-8z"/><path fill="#595959" d="M538 66h8v8h-8zM514 146h8v8h-8zM514 154h8v8h-8zM522 202h8v8h-8zM522 242h8v8h-8zM482 338h8v8h-8zM482 402h8v8h-8z"/><path fill="#5a5a5a" d="M530 74h8v8h-8zM522 82h8v8h-8zM514 98h8v8h-8zM514 106h8v8h-8zM514 114h8v8h-8zM514 122h8v8h-8zM514 130h8v8h-8zM514 138h8v8h-8zM514 162h8v8h-8zM522 210h8v8h-8zM226 234h8v8h-8zM522 234h8v8h-8zM506 298h8v8h-8zM498 314h8v8h-8zM490 322h8v8h-8zM474 370h8v8h-8zM474 378h8v8h-8zM474 386h8v8h-8zM490 418h8v8h-8zM514 450h8v8h-8z"/><path fill="#5b5b5b" d="M514 170h8v8h-8zM266 218h8v8h-8zM522 218h8v8h-8zM522 226h8v8h-8zM274 234h8v8h-8zM514 274h8v8h-8zM474 362h8v8h-8zM506 442h8v8h-8z"/><path fill="#5c5c5c" d="M514 90h8v8h-8zM514 178h8v8h-8zM226 218h8v8h-8zM506 290h8v8h-8zM482 330h8v8h-8z"/><path fill="#5d5d5d" d="M530 66h8v8h-8zM522 74h8v8h-8zM282 226h8v8h-8zM242 242h8v8h-8zM514 266h8v8h-8zM474 354h8v8h-8zM474 394h8v8h-8zM482 410h8v8h-8zM498 434h8v8h-8z"/><path fill="#5e5e5e" d="M514 82h8v8h-8zM506 98h8v8h-8zM506 106h8v8h-8zM514 186h8v8h-8zM234 242h8v8h-8zM250 242h8v8h-8zM498 306h8v8h-8zM474 346h8v8h-8z"/><path fill="#5f5f5f" d="M506 90h8v8h-8zM506 114h8v8h-8zM506 130h8v8h-8zM506 138h8v8h-8zM506 146h8v8h-8zM274 218h8v8h-8zM514 258h8v8h-8zM506 282h8v8h-8zM490 314h8v8h-8zM466 370h8v8h-8zM466 378h8v8h-8zM490 426h8v8h-8z"/><path fill="#606060" d="M506 122h8v8h-8zM506 154h8v8h-8zM506 162h8v8h-8zM514 194h8v8h-8zM218 226h8v8h-8zM282 234h8v8h-8zM258 242h8v8h-8zM514 250h8v8h-8zM482 322h8v8h-8zM474 338h8v8h-8zM474 402h8v8h-8zM506 450h8v8h-8z"/><path fill="#616161" d="M522 66h8v8h-8zM514 74h8v8h-8zM498 98h8v8h-8zM506 170h8v8h-8zM514 202h8v8h-8zM218 234h8v8h-8zM498 298h8v8h-8zM466 362h8v8h-8zM466 386h8v8h-8z"/><path fill="#626262" d="M506 82h8v8h-8zM498 90h8v8h-8zM498 106h8v8h-8zM242 210h8v8h-8zM226 242h8v8h-8zM266 242h8v8h-8zM514 242h8v8h-8zM506 274h8v8h-8zM482 418h8v8h-8zM498 442h8v8h-8z"/><path fill="#636363" d="M490 98h8v8h-8zM506 178h8v8h-8zM234 210h8v8h-8zM514 210h8v8h-8zM218 218h8v8h-8zM282 218h8v8h-8zM514 218h8v8h-8zM290 226h8v8h-8zM514 226h8v8h-8zM514 234h8v8h-8zM474 330h8v8h-8zM466 354h8v8h-8z"/><path fill="#646464" d="M514 66h8v8h-8zM250 210h8v8h-8zM498 290h8v8h-8zM490 306h8v8h-8zM466 394h8v8h-8zM490 434h8v8h-8z"/><path fill="#656565" d="M506 74h8v8h-8zM498 82h8v8h-8zM490 90h8v8h-8zM482 98h8v8h-8zM498 114h8v8h-8zM506 186h8v8h-8zM274 242h8v8h-8zM506 266h8v8h-8zM466 346h8v8h-8zM474 410h8v8h-8z"/><path fill="#666666" d="M490 106h8v8h-8zM498 122h8v8h-8zM498 130h8v8h-8zM498 138h8v8h-8zM226 210h8v8h-8zM258 210h8v8h-8zM290 234h8v8h-8zM482 314h8v8h-8zM466 338h8v8h-8zM482 426h8v8h-8z"/><path fill="#676767" d="M498 146h8v8h-8zM506 258h8v8h-8zM498 282h8v8h-8zM458 370h8v8h-8zM458 378h8v8h-8zM498 450h8v8h-8z"/><path fill="#686868" d="M506 66h8v8h-8zM482 106h8v8h-8zM498 154h8v8h-8zM506 194h8v8h-8zM218 242h8v8h-8zM490 298h8v8h-8zM474 322h8v8h-8zM466 402h8v8h-8z"/><path fill="#696969" d="M498 74h8v8h-8zM490 82h8v8h-8zM482 90h8v8h-8zM498 162h8v8h-8zM266 210h8v8h-8zM290 218h8v8h-8zM234 250h16v8h-16zM506 250h8v8h-8zM458 362h8v8h-8zM458 386h8v8h-8zM474 418h8v8h-8zM490 442h8v8h-8z"/><path fill="#6a6a6a" d="M474 98h8v8h-8zM498 170h8v8h-8zM506 202h8v8h-8zM298 226h8v8h-8zM282 242h8v8h-8zM250 250h8v8h-8zM498 274h8v8h-8zM466 330h8v8h-8z"/><path fill="#6b6b6b" d="M490 114h8v8h-8zM218 210h8v8h-8zM506 242h8v8h-8zM482 306h8v8h-8zM458 346h8v8h-8zM458 354h8v8h-8zM482 434h8v8h-8z"/><path fill="#6c6c6c" d="M490 122h8v8h-8zM490 130h8v8h-8zM498 178h8v8h-8zM506 210h8v8h-8zM506 234h8v8h-8zM226 250h8v8h-8zM490 290h8v8h-8z"/><path fill="#6d6d6d" d="M498 66h8v8h-8zM490 74h8v8h-8zM482 82h8v8h-8zM274 210h8v8h-8zM506 218h8v8h-8zM506 226h8v8h-8zM298 234h8v8h-8zM258 250h8v8h-8zM458 338h8v8h-8zM458 394h8v8h-8zM466 410h8v8h-8z"/><path fill="#6e6e6e" d="M474 90h8v8h-8zM474 106h8v8h-8zM498 186h8v8h-8zM498 266h8v8h-8zM474 314h8v8h-8zM474 426h8v8h-8zM490 450h8v8h-8z"/><path fill="#6f6f6f" d="M490 138h8v8h-8zM266 250h8v8h-8zM490 282h8v8h-8z"/><path fill="#707070" d="M466 98h8v8h-8zM490 146h8v8h-8zM298 218h8v8h-8zM290 242h8v8h-8zM218 250h8v8h-8zM466 322h8v8h-8zM482 442h8v8h-8z"/><path fill="#717171" d="M490 66h8v8h-8zM482 122h8v8h-8zM498 194h8v8h-8zM482 298h8v8h-8zM458 330h8v8h-8zM450 370h8v8h-8zM450 378h8v8h-8zM458 402h8v8h-8z"/><path fill="#727272" d="M482 74h8v8h-8zM474 82h8v8h-8zM482 114h8v8h-8zM482 130h8v8h-8zM490 154h8v8h-8zM234 202h16v8h-16zM282 210h8v8h-8zM274 250h8v8h-8zM498 258h8v8h-8zM450 362h8v8h-8zM466 418h8v8h-8z"/><path fill="#737373" d="M490 162h8v8h-8zM226 202h8v8h-8zM306 226h8v8h-8zM450 346h8v8h-8zM450 354h8v8h-8zM474 434h8v8h-8z"/><path fill="#747474" d="M466 90h8v8h-8zM466 106h8v8h-8zM482 138h8v8h-8zM490 170h8v8h-8zM250 202h8v8h-8zM498 202h8v8h-8zM242 258h8v8h-8zM450 338h8v8h-8zM450 386h8v8h-8z"/><path fill="#757575" d="M498 250h8v8h-8zM234 258h8v8h-8zM490 274h8v8h-8zM474 306h8v8h-8zM482 450h8v8h-8z"/><path fill="#767676" d="M482 66h8v8h-8zM474 114h8v8h-8zM218 202h8v8h-8zM498 210h8v8h-8zM306 234h8v8h-8zM298 242h8v8h-8zM498 242h8v8h-8zM282 250h8v8h-8zM250 258h8v8h-8zM482 290h8v8h-8zM458 410h8v8h-8zM466 426h8v8h-8z"/><path fill="#777777" d="M474 74h8v8h-8zM458 98h8v8h-8zM474 122h8v8h-8zM490 178h8v8h-8zM290 210h8v8h-8zM498 218h8v8h-8zM498 226h8v8h-8zM498 234h8v8h-8zM226 258h8v8h-8zM450 394h8v8h-8z"/><path fill="#787878" d="M466 82h8v8h-8zM482 146h8v8h-8zM258 202h8v8h-8zM306 218h8v8h-8zM474 442h8v8h-8z"/><path fill="#797979" d="M474 130h8v8h-8zM258 258h8v8h-8zM466 314h8v8h-8zM450 330h8v8h-8z"/><path fill="#7a7a7a" d="M458 90h8v8h-8zM490 186h8v8h-8zM474 298h8v8h-8zM458 418h8v8h-8z"/><path fill="#7b7b7b" d="M474 66h8v8h-8zM266 202h8v8h-8zM290 250h8v8h-8zM218 258h8v8h-8zM266 258h8v8h-8zM490 266h8v8h-8zM482 282h8v8h-8zM458 322h8v8h-8zM450 402h8v8h-8zM466 434h8v8h-8z"/><path fill="#7c7c7c" d="M466 74h8v8h-8zM450 98h8v8h-8zM466 122h8v8h-8zM482 154h8v8h-8zM442 362h8v8h-8zM442 370h8v8h-8zM474 450h8v8h-8z"/><path fill="#7d7d7d" d="M458 106h8v8h-8zM466 114h8v8h-8zM482 162h8v8h-8zM482 170h8v8h-8zM442 346h8v8h-8zM442 354h8v8h-8zM442 378h8v8h-8z"/><path fill="#7e7e7e" d="M458 82h8v8h-8zM490 194h8v8h-8zM298 210h8v8h-8zM314 226h8v8h-8zM306 242h8v8h-8zM274 258h8v8h-8zM442 338h8v8h-8z"/><path fill="#7f7f7f" d="M466 130h8v8h-8zM474 138h8v8h-8zM242 266h8v8h-8zM442 386h8v8h-8zM450 410h8v8h-8zM458 426h8v8h-8z"/><path fill="#808080" d="M466 66h8v8h-8zM450 90h8v8h-8zM274 202h8v8h-8zM490 202h8v8h-8zM490 258h8v8h-8zM234 266h8v8h-8zM474 290h8v8h-8zM466 442h8v8h-8z"/><path fill="#818181" d="M442 98h8v8h-8zM482 178h8v8h-8zM226 194h16v8h-16zM490 210h8v8h-8zM314 234h8v8h-8zM250 266h8v8h-8zM466 306h8v8h-8z"/><path fill="#828282" d="M458 74h8v8h-8zM450 106h8v8h-8zM474 146h8v8h-8zM218 194h8v8h-8zM298 250h8v8h-8zM282 258h8v8h-8zM226 266h8v8h-8zM442 330h8v8h-8zM442 394h8v8h-8z"/><path fill="#838383" d="M474 162h8v8h-8zM242 194h8v8h-8zM314 218h8v8h-8zM490 218h8v8h-8zM490 250h8v8h-8zM482 274h8v8h-8zM458 434h8v8h-8z"/><path fill="#848484" d="M450 82h8v8h-8zM466 138h8v8h-8zM474 154h8v8h-8zM490 226h8v8h-8zM490 234h8v8h-8zM490 242h8v8h-8zM450 418h8v8h-8zM466 450h8v8h-8z"/><path fill="#858585" d="M458 66h8v8h-8zM442 90h8v8h-8zM458 114h8v8h-8zM458 122h8v8h-8zM474 170h8v8h-8zM282 202h8v8h-8zM306 210h8v8h-8zM258 266h8v8h-8z"/><path fill="#868686" d="M434 98h8v8h-8zM250 194h8v8h-8zM218 266h8v8h-8zM458 314h8v8h-8zM450 322h8v8h-8zM442 402h8v8h-8z"/><path fill="#878787" d="M450 74h8v8h-8zM442 106h8v8h-8zM458 130h8v8h-8zM482 186h8v8h-8zM290 258h8v8h-8zM242 274h8v8h-8zM466 298h8v8h-8z"/><path fill="#888888" d="M434 90h8v8h-8zM266 266h8v8h-8zM474 282h8v8h-8zM434 362h8v8h-8zM434 370h8v8h-8zM450 426h8v8h-8zM458 442h8v8h-8z"/><path fill="#898989" d="M442 82h8v8h-8zM426 98h8v8h-8zM258 194h8v8h-8zM306 250h8v8h-8zM434 354h8v8h-8zM434 378h8v8h-8zM442 410h8v8h-8z"/><path fill="#8a8a8a" d="M450 66h8v8h-8zM426 90h8v8h-8zM450 122h8v8h-8zM314 242h8v8h-8zM274 266h8v8h-8zM234 274h8v8h-8zM434 386h8v8h-8z"/><path fill="#8b8b8b" d="M442 74h8v8h-8zM434 82h8v8h-8zM466 146h8v8h-8zM474 178h8v8h-8zM290 202h8v8h-8zM482 266h8v8h-8zM250 274h8v8h-8zM434 346h8v8h-8z"/><path fill="#8c8c8c" d="M450 114h8v8h-8zM482 194h8v8h-8zM466 290h8v8h-8zM434 338h8v8h-8zM450 434h8v8h-8zM458 450h8v8h-8z"/><path fill="#8d8d8d" d="M426 82h8v8h-8zM466 162h8v8h-8zM298 258h8v8h-8zM434 394h8v8h-8zM442 418h8v8h-8z"/><path fill="#8e8e8e" d="M442 66h8v8h-8zM434 74h8v8h-8zM434 106h8v8h-8zM450 130h8v8h-8zM458 138h8v8h-8zM218 186h8v8h-8zM266 194h8v8h-8zM482 202h8v8h-8zM322 226h8v8h-8zM226 274h8v8h-8z"/><path fill="#8f8f8f" d="M426 106h8v8h-8zM466 154h8v8h-8zM466 170h8v8h-8zM226 186h8v8h-8zM314 210h8v8h-8zM282 266h8v8h-8zM434 330h8v8h-8z"/><path fill="#909090" d="M418 90h8v8h-8zM418 98h8v8h-8zM442 122h8v8h-8zM482 258h8v8h-8zM242 282h8v8h-8zM442 322h8v8h-8zM434 402h8v8h-8zM450 442h8v8h-8z"/><path fill="#919191" d="M434 66h8v8h-8zM426 74h8v8h-8zM234 186h8v8h-8zM298 202h8v8h-8zM482 210h8v8h-8zM322 234h8v8h-8zM218 274h8v8h-8zM258 274h8v8h-8zM458 306h8v8h-8zM442 426h8v8h-8z"/><path fill="#929292" d="M418 82h8v8h-8zM442 114h8v8h-8zM474 186h8v8h-8zM274 194h8v8h-8zM482 218h8v8h-8z"/><path fill="#939393" d="M442 130h8v8h-8zM242 186h8v8h-8zM322 218h8v8h-8zM482 226h8v8h-8zM482 234h8v8h-8zM482 242h8v8h-8zM482 250h8v8h-8zM474 274h8v8h-8zM426 362h8v8h-8zM426 370h8v8h-8z"/><path fill="#949494" d="M314 250h8v8h-8zM290 266h8v8h-8zM426 378h8v8h-8zM434 410h8v8h-8zM450 450h8v8h-8z"/><path fill="#959595" d="M426 66h8v8h-8zM418 106h8v8h-8zM306 258h8v8h-8zM266 274h8v8h-8zM442 434h8v8h-8z"/><path fill="#969696" d="M418 74h8v8h-8zM466 178h8v8h-8zM250 186h8v8h-8zM234 282h8v8h-8zM250 282h8v8h-8zM458 298h8v8h-8zM450 314h8v8h-8zM426 354h8v8h-8zM426 386h8v8h-8z"/><path fill="#979797" d="M434 418h8v8h-8z"/><path fill="#989898" d="M410 90h8v8h-8zM282 194h8v8h-8zM474 194h8v8h-8zM306 202h8v8h-8zM274 274h8v8h-8zM426 394h8v8h-8zM442 442h8v8h-8z"/><path fill="#999999" d="M410 82h8v8h-8zM426 114h8v8h-8zM434 122h8v8h-8zM434 130h8v8h-8zM458 146h8v8h-8zM218 178h8v8h-8zM322 242h8v8h-8zM466 282h8v8h-8z"/><path fill="#9a9a9a" d="M418 66h8v8h-8zM410 98h8v8h-8zM434 114h8v8h-8zM258 186h8v8h-8zM298 266h8v8h-8zM226 282h8v8h-8zM458 290h8v8h-8zM426 346h8v8h-8zM434 426h8v8h-8z"/><path fill="#9b9b9b" d="M450 138h8v8h-8zM426 402h8v8h-8z"/><path fill="#9c9c9c" d="M410 74h8v8h-8zM226 178h8v8h-8zM474 202h8v8h-8zM474 266h8v8h-8zM218 282h8v8h-8zM434 322h8v8h-8zM442 450h8v8h-8z"/><path fill="#9d9d9d" d="M418 114h8v8h-8zM426 122h8v8h-8zM466 186h8v8h-8zM322 210h8v8h-8zM282 274h8v8h-8zM426 338h8v8h-8z"/><path fill="#9e9e9e" d="M410 106h8v8h-8zM442 138h8v8h-8zM234 178h8v8h-8zM266 186h8v8h-8zM290 194h8v8h-8zM314 258h8v8h-8zM258 282h8v8h-8zM426 330h8v8h-8zM418 362h8v8h-8zM418 370h8v8h-8zM426 410h8v8h-8zM434 434h8v8h-8z"/><path fill="#9f9f9f" d="M410 66h8v8h-8zM426 130h8v8h-8zM474 210h8v8h-8zM418 378h8v8h-8z"/><path fill="#a0a0a0" d="M402 82h8v8h-8zM402 90h8v8h-8zM458 154h8v8h-8zM458 170h8v8h-8zM314 202h8v8h-8zM306 266h8v8h-8zM242 290h8v8h-8zM418 354h8v8h-8z"/><path fill="#a1a1a1" d="M458 162h8v8h-8zM242 178h8v8h-8zM474 218h8v8h-8zM418 386h8v8h-8zM426 418h8v8h-8zM434 442h8v8h-8z"/><path fill="#a2a2a2" d="M402 74h8v8h-8zM402 98h8v8h-8zM418 122h8v8h-8zM274 186h8v8h-8zM322 250h8v8h-8zM474 258h8v8h-8zM290 274h8v8h-8zM266 282h8v8h-8zM450 306h8v8h-8z"/><path fill="#a3a3a3" d="M218 170h8v8h-8zM458 178h8v8h-8zM474 226h8v8h-8zM474 234h8v8h-8zM250 290h8v8h-8zM418 394h8v8h-8z"/><path fill="#a4a4a4" d="M402 66h8v8h-8zM410 114h8v8h-8zM434 138h8v8h-8zM250 178h8v8h-8zM298 194h8v8h-8zM466 194h8v8h-8zM474 242h8v8h-8zM474 250h8v8h-8zM234 290h8v8h-8zM442 314h8v8h-8zM426 426h8v8h-8zM434 450h8v8h-8z"/><path fill="#a5a5a5" d="M418 130h8v8h-8zM466 274h8v8h-8zM274 282h8v8h-8zM218 290h16v8h-16zM418 346h8v8h-8z"/><path fill="#a6a6a6" d="M394 82h8v8h-8zM394 90h8v8h-8zM402 106h8v8h-8zM226 170h8v8h-8zM330 226h8v8h-8zM418 402h8v8h-8z"/><path fill="#a7a7a7" d="M394 74h8v8h-8zM450 146h8v8h-8zM282 186h8v8h-8zM330 218h8v8h-8zM298 274h8v8h-8zM450 298h8v8h-8zM410 354h8v8h-8zM410 362h8v8h-8zM426 434h8v8h-8z"/><path fill="#a8a8a8" d="M394 98h8v8h-8zM258 178h8v8h-8zM330 234h8v8h-8zM314 266h8v8h-8zM450 290h8v8h-8zM418 330h8v8h-8zM410 370h8v8h-8zM418 410h8v8h-8z"/><path fill="#a9a9a9" d="M410 122h8v8h-8zM426 138h8v8h-8zM466 202h8v8h-8zM322 258h8v8h-8zM282 282h8v8h-8zM258 290h8v8h-8zM418 338h8v8h-8z"/><path fill="#aaaaaa" d="M394 66h8v8h-8zM234 170h8v8h-8zM458 186h8v8h-8zM306 194h8v8h-8zM322 202h8v8h-8zM458 282h8v8h-8zM426 322h8v8h-8zM410 378h8v8h-8zM426 442h8v8h-8z"/><path fill="#ababab" d="M386 82h8v8h-8zM386 90h8v8h-8zM394 106h8v8h-8zM402 114h8v8h-8zM218 162h8v8h-8zM266 178h8v8h-8zM330 242h8v8h-8zM418 418h8v8h-8z"/><path fill="#acacac" d="M386 98h8v8h-8zM410 130h8v8h-8zM290 186h8v8h-8zM306 274h8v8h-8zM266 290h8v8h-8zM242 298h8v8h-8zM410 346h8v8h-8zM410 386h8v8h-8zM426 450h8v8h-8z"/><path fill="#adadad" d="M386 74h8v8h-8zM242 170h8v8h-8zM330 210h8v8h-8zM466 266h8v8h-8zM218 298h24v8h-24zM250 298h8v8h-8zM434 314h8v8h-8zM418 426h8v8h-8z"/><path fill="#aeaeae" d="M274 178h8v8h-8zM466 210h8v8h-8zM290 282h8v8h-8zM274 290h8v8h-8zM410 330h8v8h-8zM402 354h8v8h-8zM410 394h8v8h-8z"/><path fill="#afafaf" d="M378 82h8v8h-8zM378 90h8v8h-8zM386 106h8v8h-8zM394 114h8v8h-8zM402 122h8v8h-8zM450 154h8v8h-8zM226 162h8v8h-8zM450 170h8v8h-8z"/><path fill="#b0b0b0" d="M386 66h8v8h-8zM250 170h8v8h-8zM330 250h8v8h-8zM258 298h8v8h-8zM442 306h8v8h-8zM410 338h8v8h-8zM402 362h8v8h-8zM410 402h8v8h-8zM418 434h8v8h-8z"/><path fill="#b1b1b1" d="M378 98h8v8h-8zM442 146h8v8h-8zM218 154h8v8h-8zM450 162h8v8h-8zM298 186h8v8h-8zM314 194h8v8h-8zM458 194h8v8h-8zM466 218h8v8h-8zM322 266h8v8h-8zM298 282h8v8h-8zM282 290h8v8h-8zM402 346h8v8h-8z"/><path fill="#b2b2b2" d="M378 74h8v8h-8zM402 130h8v8h-8zM418 138h8v8h-8zM282 178h8v8h-8zM450 178h8v8h-8zM466 258h8v8h-8zM442 290h8v8h-8zM266 298h8v8h-8zM402 330h8v8h-8zM402 370h8v8h-8zM410 410h8v8h-8zM418 442h8v8h-8z"/><path fill="#b3b3b3" d="M378 106h8v8h-8zM386 114h8v8h-8zM394 122h8v8h-8zM234 162h8v8h-8zM258 170h8v8h-8zM466 226h8v8h-8zM314 274h8v8h-8zM442 298h8v8h-8zM234 306h24v8h-24z"/><path fill="#b4b4b4" d="M226 154h8v8h-8zM466 234h8v8h-8zM330 258h8v8h-8zM290 290h8v8h-8zM274 298h8v8h-8zM218 306h16v8h-16zM402 378h8v8h-8zM410 418h8v8h-8zM418 450h8v8h-8z"/><path fill="#b5b5b5" d="M370 90h8v8h-8zM218 146h8v8h-8zM266 170h8v8h-8zM290 178h8v8h-8zM330 202h8v8h-8zM466 242h8v8h-8zM466 250h8v8h-8z"/><path fill="#b6b6b6" d="M378 66h8v8h-8zM370 82h8v8h-8zM378 114h8v8h-8zM386 122h8v8h-8zM242 162h8v8h-8zM306 186h8v8h-8zM322 194h8v8h-8zM458 274h8v8h-8zM306 282h8v8h-8zM258 306h8v8h-8zM418 322h8v8h-8zM394 330h8v8h-8zM402 338h8v8h-8zM394 346h8v8h-8zM394 354h8v8h-8zM402 386h8v8h-8zM410 426h8v8h-8z"/><path fill="#b7b7b7" d="M370 98h8v8h-8zM394 130h8v8h-8zM226 146h8v8h-8zM458 202h8v8h-8zM298 290h8v8h-8zM282 298h8v8h-8zM386 330h8v8h-8z"/><path fill="#b8b8b8" d="M410 138h8v8h-8zM234 154h8v8h-8zM250 162h8v8h-8zM274 170h8v8h-8zM450 186h8v8h-8zM266 306h8v8h-8zM434 306h8v8h-8zM402 394h8v8h-8zM410 434h8v8h-8z"/><path fill="#b9b9b9" d="M370 106h8v8h-8zM378 122h8v8h-8zM234 146h8v8h-8zM298 178h8v8h-8zM330 266h8v8h-8zM450 282h8v8h-8zM274 306h8v8h-8zM394 338h8v8h-8zM402 402h8v8h-8z"/><path fill="#bababa" d="M370 74h8v8h-8zM370 114h8v8h-8zM386 130h8v8h-8zM242 146h8v8h-8zM242 154h8v8h-8zM282 170h8v8h-8zM314 186h8v8h-8zM322 274h8v8h-8zM218 314h40v8h-40zM410 322h8v8h-8zM386 346h8v8h-8zM394 362h8v8h-8zM410 442h8v8h-8z"/><path fill="#bbbbbb" d="M218 138h8v8h-8zM434 146h8v8h-8zM258 162h8v8h-8zM338 226h8v8h-8zM314 282h8v8h-8zM306 290h8v8h-8zM290 298h8v8h-8zM434 298h8v8h-8zM282 306h8v8h-8zM258 314h8v8h-8zM426 314h8v8h-8zM378 330h8v8h-8zM386 354h8v8h-8zM402 410h8v8h-8z"/><path fill="#bcbcbc" d="M370 122h8v8h-8zM226 138h16v8h-16zM250 146h8v8h-8zM250 154h8v8h-8zM266 162h8v8h-8zM442 170h8v8h-8zM306 178h8v8h-8zM458 210h8v8h-8zM338 218h8v8h-8zM298 298h8v8h-8zM386 338h8v8h-8zM378 346h8v8h-8zM394 370h8v8h-8zM410 450h8v8h-8z"/><path fill="#bdbdbd" d="M378 130h8v8h-8zM242 138h8v8h-8zM402 138h8v8h-8zM442 162h8v8h-8zM290 170h8v8h-8zM322 186h8v8h-8zM338 234h8v8h-8zM458 266h8v8h-8zM314 290h8v8h-8zM266 314h8v8h-8zM402 418h8v8h-8z"/><path fill="#bebebe" d="M370 66h8v8h-8zM250 138h8v8h-8zM330 138h16v8h-16zM258 146h8v8h-8zM258 154h8v8h-8zM442 154h8v8h-8zM274 162h8v8h-8zM314 178h8v8h-8zM330 194h8v8h-8zM290 306h8v8h-8zM274 314h8v8h-8zM402 322h8v8h-8zM394 378h8v8h-8z"/><path fill="#bfbfbf" d="M362 90h8v8h-8zM362 98h8v8h-8zM362 106h8v8h-8zM362 114h8v8h-8zM362 122h8v8h-8zM322 138h8v8h-8zM266 146h16v8h-16zM266 154h8v8h-8zM322 178h8v8h-8zM450 194h8v8h-8zM338 210h8v8h-8zM338 242h8v8h-8zM322 282h8v8h-8zM434 290h8v8h-8zM306 298h8v8h-8zM298 306h8v8h-8zM282 314h8v8h-8zM378 338h8v8h-8zM378 354h8v8h-8zM394 386h8v8h-8zM402 426h8v8h-8z"/><path fill="#c0c0c0" d="M370 130h8v8h-8zM258 138h24v8h-24zM314 138h8v8h-8zM274 154h8v8h-8zM282 162h8v8h-8zM298 170h8v8h-8zM458 218h8v8h-8zM338 250h8v8h-8zM330 274h8v8h-8zM290 314h8v8h-8zM370 346h8v8h-8zM402 434h8v8h-8z"/><path fill="#c1c1c1" d="M362 82h8v8h-8zM330 130h24v8h-24zM362 130h8v8h-8zM346 138h8v8h-8zM282 146h8v8h-8zM442 178h8v8h-8zM338 258h8v8h-8zM338 266h8v8h-8zM322 290h8v8h-8zM306 306h8v8h-8zM298 314h8v8h-8zM370 330h8v8h-8zM386 362h8v8h-8zM394 394h8v8h-8z"/><path fill="#c2c2c2" d="M354 122h8v8h-8zM322 130h8v8h-8zM354 130h8v8h-8zM282 138h8v8h-8zM298 138h16v8h-16zM394 138h8v8h-8zM322 146h16v8h-16zM282 154h8v8h-8zM290 162h8v8h-8zM306 170h8v8h-8zM458 226h8v8h-8zM458 258h8v8h-8zM314 298h8v8h-8zM306 314h8v8h-8zM218 322h48v8h-48zM394 322h8v8h-8zM370 338h8v8h-8zM370 354h8v8h-8zM394 402h8v8h-8zM402 442h8v8h-8z"/><path fill="#c3c3c3" d="M290 138h8v8h-8zM290 146h16v8h-16zM314 146h8v8h-8zM338 146h8v8h-8zM426 146h8v8h-8zM314 170h16v8h-16zM442 282h8v8h-8zM322 298h8v8h-8zM314 306h8v8h-8zM266 322h16v8h-16zM386 322h8v8h-8z"/><path fill="#c4c4c4" d="M362 74h8v8h-8zM346 122h8v8h-8zM314 130h8v8h-8zM354 138h8v8h-8zM386 138h8v8h-8zM306 146h8v8h-8zM290 154h8v8h-8zM330 186h8v8h-8zM458 234h8v8h-8zM458 250h8v8h-8zM450 274h8v8h-8zM330 290h8v8h-8zM330 298h8v8h-8zM314 314h8v8h-8zM282 322h16v8h-16zM386 370h8v8h-8zM394 410h8v8h-8zM402 450h8v8h-8z"/><path fill="#c5c5c5" d="M354 114h8v8h-8zM330 122h16v8h-16zM226 130h8v8h-8zM306 130h8v8h-8zM298 162h8v8h-8zM330 178h8v8h-8zM338 202h8v8h-8zM450 202h8v8h-8zM458 242h8v8h-8zM330 282h8v8h-8zM322 306h16v8h-16zM322 314h8v8h-8zM298 322h8v8h-8zM378 322h8v8h-8zM362 330h8v8h-8zM362 338h8v8h-8zM362 346h8v8h-8zM394 418h8v8h-8z"/><path fill="#c6c6c6" d="M354 106h8v8h-8zM218 130h8v8h-8zM234 130h16v8h-16zM258 130h8v8h-8zM362 138h8v8h-8zM346 146h8v8h-8zM298 154h8v8h-8zM306 162h8v8h-8zM338 298h8v8h-8zM426 298h8v8h-8zM330 314h8v8h-8zM306 322h8v8h-8zM362 354h8v8h-8zM378 362h8v8h-8zM386 378h8v8h-8z"/><path fill="#c7c7c7" d="M362 66h8v8h-8zM354 98h8v8h-8zM322 122h8v8h-8zM250 130h8v8h-8zM266 130h40v8h-40zM378 138h8v8h-8zM306 154h8v8h-8zM322 154h8v8h-8zM314 162h16v8h-16zM330 170h8v8h-8zM338 290h8v8h-8zM338 306h8v8h-8zM426 306h8v8h-8zM338 314h8v8h-8zM418 314h8v8h-8zM314 322h16v8h-16zM394 426h8v8h-8z"/><path fill="#c8c8c8" d="M346 114h8v8h-8zM314 122h8v8h-8zM370 138h8v8h-8zM314 154h8v8h-8zM330 154h8v8h-8zM442 186h8v8h-8zM338 274h8v8h-8zM346 314h8v8h-8zM330 322h8v8h-8zM346 322h8v8h-8zM370 322h8v8h-8zM386 386h8v8h-8zM394 434h8v8h-8z"/><path fill="#c9c9c9" d="M338 114h8v8h-8zM338 322h8v8h-8zM354 322h16v8h-16zM354 330h8v8h-8zM370 362h8v8h-8zM386 394h8v8h-8z"/><path fill="#cacaca" d="M354 90h8v8h-8zM330 114h8v8h-8zM306 122h8v8h-8zM354 146h8v8h-8zM330 162h8v8h-8zM450 210h8v8h-8zM346 306h8v8h-8zM354 314h8v8h-8zM218 330h56v8h-56zM354 338h8v8h-8zM378 370h8v8h-8zM394 442h8v8h-8z"/><path fill="#cbcbcb" d="M346 106h8v8h-8zM322 114h8v8h-8zM298 122h8v8h-8zM338 154h8v8h-8zM346 298h8v8h-8zM274 330h48v8h-48zM354 346h8v8h-8zM386 402h8v8h-8zM394 450h8v8h-8z"/><path fill="#cccccc" d="M266 122h32v8h-32zM418 146h8v8h-8zM434 162h8v8h-8zM434 170h8v8h-8zM338 194h8v8h-8zM450 266h8v8h-8zM338 282h8v8h-8zM354 306h8v8h-8zM410 314h8v8h-8zM322 330h32v8h-32zM362 362h8v8h-8zM378 378h8v8h-8zM386 410h8v8h-8z"/><path fill="#cdcdcd" d="M354 82h8v8h-8zM346 98h8v8h-8zM338 106h8v8h-8zM314 114h8v8h-8zM218 122h24v8h-24zM250 122h16v8h-16zM426 290h8v8h-8zM362 314h8v8h-8zM386 418h8v8h-8z"/><path fill="#cecece" d="M354 74h8v8h-8zM330 106h8v8h-8zM306 114h8v8h-8zM242 122h8v8h-8zM346 154h8v8h-8zM434 154h8v8h-8zM442 194h8v8h-8zM450 218h8v8h-8zM434 282h8v8h-8zM346 290h8v8h-8zM370 370h8v8h-8z"/><path fill="#cfcfcf" d="M354 66h8v8h-8zM322 106h8v8h-8zM298 114h8v8h-8zM362 146h8v8h-8zM346 338h8v8h-8zM354 354h8v8h-8zM378 386h8v8h-8zM386 426h8v8h-8z"/><path fill="#d0d0d0" d="M338 98h8v8h-8zM290 114h8v8h-8zM346 226h8v8h-8zM346 266h8v8h-8zM442 274h8v8h-8zM370 314h8v8h-8zM402 314h8v8h-8zM322 338h8v8h-8zM386 434h8v8h-8z"/><path fill="#d1d1d1" d="M346 90h8v8h-8zM314 106h8v8h-8zM274 114h16v8h-16zM450 226h8v8h-8zM450 258h8v8h-8zM354 298h8v8h-8zM362 306h8v8h-8zM306 338h16v8h-16zM330 338h16v8h-16zM378 394h8v8h-8zM386 442h8v8h-8z"/><path fill="#d2d2d2" d="M330 98h8v8h-8zM266 114h8v8h-8zM410 146h8v8h-8zM338 162h8v8h-8zM434 178h8v8h-8zM338 186h8v8h-8zM346 218h8v8h-8zM346 234h8v8h-8zM346 258h8v8h-8zM378 314h8v8h-8zM218 338h64v8h-64zM290 338h16v8h-16zM346 346h8v8h-8zM370 378h8v8h-8zM378 402h8v8h-8zM386 450h8v8h-8z"/><path fill="#d3d3d3" d="M306 106h8v8h-8zM250 114h16v8h-16zM450 234h8v8h-8zM450 250h8v8h-8zM418 306h8v8h-8zM386 314h16v8h-16zM282 338h8v8h-8zM362 370h8v8h-8zM378 410h8v8h-8z"/><path fill="#d4d4d4" d="M338 90h8v8h-8zM322 98h8v8h-8zM298 106h8v8h-8zM218 114h8v8h-8zM234 114h16v8h-16zM354 154h8v8h-8zM442 202h8v8h-8zM450 242h8v8h-8zM410 306h8v8h-8zM354 362h8v8h-8z"/><path fill="#d5d5d5" d="M346 82h8v8h-8zM330 90h8v8h-8zM226 114h8v8h-8zM370 146h8v8h-8zM402 146h8v8h-8zM346 242h8v8h-8zM346 250h8v8h-8zM346 274h8v8h-8zM370 306h8v8h-8zM338 346h8v8h-8zM370 386h8v8h-8zM378 418h8v8h-8z"/><path fill="#d6d6d6" d="M346 74h8v8h-8zM314 98h8v8h-8zM290 106h8v8h-8zM338 170h8v8h-8zM338 178h8v8h-8zM346 210h8v8h-8zM418 298h8v8h-8zM322 346h16v8h-16zM378 426h8v8h-8z"/><path fill="#d7d7d7" d="M346 66h8v8h-8zM282 106h8v8h-8zM378 146h24v8h-24zM410 298h8v8h-8zM314 346h8v8h-8zM346 354h8v8h-8zM370 394h8v8h-8zM378 434h8v8h-8z"/><path fill="#d8d8d8" d="M338 82h8v8h-8zM322 90h8v8h-8zM306 98h8v8h-8zM274 106h8v8h-8zM434 186h8v8h-8zM346 282h8v8h-8zM362 298h8v8h-8zM306 346h8v8h-8zM362 378h8v8h-8zM378 442h8v8h-8zM378 450h8v8h-8z"/><path fill="#d9d9d9" d="M442 210h8v8h-8zM442 266h8v8h-8zM378 306h8v8h-8zM298 346h8v8h-8zM370 402h8v8h-8z"/><path fill="#dadada" d="M338 74h8v8h-8zM330 82h8v8h-8zM314 90h8v8h-8zM298 98h8v8h-8zM266 106h8v8h-8zM426 154h8v8h-8zM346 162h8v8h-8zM346 202h8v8h-8zM266 346h32v8h-32zM354 370h8v8h-8zM370 410h8v8h-8z"/><path fill="#dbdbdb" d="M250 106h16v8h-16zM362 154h8v8h-8zM402 306h8v8h-8zM218 346h48v8h-48zM338 354h8v8h-8zM362 386h8v8h-8zM370 418h8v8h-8z"/><path fill="#dcdcdc" d="M338 66h8v8h-8zM322 82h8v8h-8zM290 98h8v8h-8zM218 106h32v8h-32zM442 218h8v8h-8zM434 274h8v8h-8zM426 282h8v8h-8zM354 290h8v8h-8zM370 426h8v8h-8z"/><path fill="#dddddd" d="M330 74h8v8h-8zM306 90h8v8h-8zM386 306h8v8h-8zM322 354h16v8h-16zM346 362h8v8h-8zM362 394h8v8h-8zM370 434h8v8h-8z"/><path fill="#dedede" d="M282 98h8v8h-8zM346 194h8v8h-8zM434 194h8v8h-8zM442 258h8v8h-8zM394 306h8v8h-8zM306 354h16v8h-16zM354 378h8v8h-8zM370 442h8v8h-8z"/><path fill="#dfdfdf" d="M314 82h8v8h-8zM442 226h8v8h-8zM370 298h8v8h-8zM298 354h8v8h-8zM362 402h8v8h-8zM370 450h8v8h-8z"/><path fill="#e0e0e0" d="M330 66h8v8h-8zM322 74h8v8h-8zM298 90h8v8h-8zM274 98h8v8h-8zM442 250h8v8h-8zM290 354h8v8h-8zM362 410h8v8h-8z"/><path fill="#e1e1e1" d="M426 162h8v8h-8zM442 234h8v8h-8zM442 242h8v8h-8zM354 266h8v8h-8zM418 290h8v8h-8zM274 354h16v8h-16zM338 362h8v8h-8zM346 370h8v8h-8zM354 386h8v8h-8zM362 418h8v8h-8z"/><path fill="#e2e2e2" d="M306 82h8v8h-8zM266 98h8v8h-8zM354 162h8v8h-8zM426 170h8v8h-8zM434 202h8v8h-8zM218 354h56v8h-56zM362 426h8v8h-8z"/><path fill="#e3e3e3" d="M322 66h8v8h-8zM314 74h8v8h-8zM290 90h8v8h-8zM218 98h24v8h-24zM258 98h8v8h-8zM346 186h8v8h-8zM330 362h8v8h-8zM354 394h8v8h-8zM362 434h8v8h-8z"/><path fill="#e4e4e4" d="M242 98h16v8h-16zM370 154h8v8h-8zM346 170h8v8h-8zM354 226h8v8h-8zM354 258h8v8h-8zM434 266h8v8h-8zM354 274h8v8h-8zM314 362h16v8h-16zM346 378h8v8h-8zM362 442h8v8h-8zM362 450h8v8h-8z"/><path fill="#e5e5e5" d="M298 82h8v8h-8zM282 90h8v8h-8zM418 154h8v8h-8zM426 178h8v8h-8zM362 290h8v8h-8zM378 298h8v8h-8zM306 362h8v8h-8zM338 370h8v8h-8zM354 402h8v8h-8z"/><path fill="#e6e6e6" d="M306 74h8v8h-8zM434 210h8v8h-8zM354 218h8v8h-8zM354 234h8v8h-8zM290 362h16v8h-16zM346 386h8v8h-8zM354 410h8v8h-8z"/><path fill="#e7e7e7" d="M314 66h8v8h-8zM274 90h8v8h-8zM346 178h8v8h-8zM354 282h8v8h-8zM402 298h8v8h-8zM266 362h24v8h-24zM354 418h8v8h-8z"/><path fill="#e8e8e8" d="M290 82h8v8h-8zM266 90h8v8h-8zM354 242h8v8h-8zM354 250h8v8h-8zM426 274h8v8h-8zM218 362h48v8h-48zM330 370h8v8h-8zM338 378h8v8h-8zM346 394h8v8h-8zM354 426h8v8h-8zM354 434h8v8h-8z"/><path fill="#e9e9e9" d="M298 74h8v8h-8zM218 90h16v8h-16zM378 154h8v8h-8zM362 162h8v8h-8zM426 186h8v8h-8zM354 210h8v8h-8zM410 290h8v8h-8zM322 370h8v8h-8zM354 442h8v8h-8zM354 450h8v8h-8z"/><path fill="#eaeaea" d="M306 66h8v8h-8zM282 82h8v8h-8zM234 90h8v8h-8zM258 90h8v8h-8zM434 218h8v8h-8zM434 258h8v8h-8zM386 298h8v8h-8zM314 370h8v8h-8zM346 402h8v8h-8z"/><path fill="#ebebeb" d="M242 90h16v8h-16zM394 298h8v8h-8zM298 370h16v8h-16zM330 378h8v8h-8zM338 386h8v8h-8zM346 410h8v8h-8z"/><path fill="#ececec" d="M290 74h8v8h-8zM274 82h8v8h-8zM386 154h8v8h-8zM410 154h8v8h-8zM354 202h8v8h-8zM434 226h8v8h-8zM370 290h8v8h-8zM266 370h32v8h-32zM346 418h8v8h-8z"/><path fill="#ededed" d="M298 66h8v8h-8zM426 194h8v8h-8zM434 234h8v8h-8zM434 250h8v8h-8zM218 370h48v8h-48zM322 378h8v8h-8zM338 394h8v8h-8zM346 426h8v8h-8zM346 434h8v8h-8z"/><path fill="#eeeeee" d="M282 74h8v8h-8zM266 82h8v8h-8zM394 154h8v8h-8zM354 170h8v8h-8zM434 242h8v8h-8zM362 282h8v8h-8zM418 282h8v8h-8zM314 378h8v8h-8zM330 386h8v8h-8zM338 402h8v8h-8zM346 442h8v8h-8zM346 450h8v8h-8z"/><path fill="#efefef" d="M218 82h16v8h-16zM258 82h8v8h-8zM402 154h8v8h-8zM354 194h8v8h-8zM402 290h8v8h-8zM306 378h8v8h-8zM338 410h8v8h-8z"/><path fill="#f0f0f0" d="M290 66h8v8h-8zM274 74h8v8h-8zM234 82h24v8h-24zM426 202h8v8h-8zM426 266h8v8h-8zM362 274h8v8h-8zM282 378h24v8h-24zM322 386h8v8h-8zM330 394h8v8h-8zM338 418h8v8h-8z"/><path fill="#f1f1f1" d="M418 162h8v8h-8zM362 266h8v8h-8zM378 290h8v8h-8zM218 378h8v8h-8zM242 378h40v8h-40zM330 402h8v8h-8zM338 426h8v8h-8zM338 434h8v8h-8z"/><path fill="#f2f2f2" d="M282 66h8v8h-8zM266 74h8v8h-8zM370 162h8v8h-8zM354 186h8v8h-8zM226 378h16v8h-16zM314 386h8v8h-8zM322 394h8v8h-8zM338 442h8v8h-8zM338 450h8v8h-8z"/><path fill="#f3f3f3" d="M258 74h8v8h-8zM426 210h8v8h-8zM362 258h8v8h-8zM394 290h8v8h-8zM298 386h16v8h-16zM330 410h8v8h-8z"/><path fill="#f4f4f4" d="M274 66h8v8h-8zM218 74h40v8h-40zM418 170h8v8h-8zM354 178h8v8h-8zM386 290h8v8h-8zM282 386h16v8h-16zM314 394h8v8h-8zM322 402h8v8h-8zM330 418h8v8h-8z"/><path fill="#f5f5f5" d="M362 170h8v8h-8zM426 218h8v8h-8zM362 226h8v8h-8zM362 234h8v8h-8zM426 258h8v8h-8zM418 274h8v8h-8zM370 282h8v8h-8zM258 386h24v8h-24zM330 426h8v8h-8zM330 434h8v8h-8z"/><path fill="#f6f6f6" d="M266 66h8v8h-8zM418 178h8v8h-8zM362 218h8v8h-8zM362 242h8v8h-8zM362 250h8v8h-8zM410 282h8v8h-8zM218 386h40v8h-40zM306 394h8v8h-8zM314 402h8v8h-8zM322 410h8v8h-8zM330 442h8v8h-8zM330 450h8v8h-8z"/><path fill="#f7f7f7" d="M258 66h8v8h-8zM426 226h8v8h-8zM426 250h8v8h-8zM290 394h16v8h-16zM322 418h8v8h-8z"/><path fill="#f8f8f8" d="M218 66h40v8h-40zM378 162h8v8h-8zM418 186h8v8h-8zM362 210h8v8h-8zM426 234h8v8h-8zM426 242h8v8h-8zM274 394h16v8h-16zM306 402h8v8h-8zM314 410h8v8h-8zM322 426h8v8h-8zM322 434h8v8h-8z"/><path fill="#f9f9f9" d="M370 274h8v8h-8zM402 282h8v8h-8zM218 394h56v8h-56zM298 402h8v8h-8zM314 418h8v8h-8zM322 442h8v8h-8z"/><path fill="#fafafa" d="M418 194h8v8h-8zM362 202h8v8h-8zM418 266h8v8h-8zM378 282h8v8h-8zM290 402h8v8h-8zM306 410h8v8h-8zM314 426h8v8h-8zM322 450h8v8h-8z"/><path fill="#fbfbfb" d="M410 162h8v8h-8zM394 282h8v8h-8zM274 402h16v8h-16zM298 410h8v8h-8zM306 418h8v8h-8zM314 434h8v8h-8z"/><path fill="#fcfcfc" d="M386 162h8v8h-8zM370 170h8v8h-8zM362 178h8v8h-8zM362 194h8v8h-8zM418 202h8v8h-8zM370 266h8v8h-8zM386 282h8v8h-8zM250 402h24v8h-24zM290 410h8v8h-8zM314 442h8v8h-8zM314 450h8v8h-8z"/><path fill="#fdfdfd" d="M362 186h8v8h-8zM410 274h8v8h-8zM218 402h32v8h-32zM282 410h8v8h-8zM298 418h8v8h-8zM306 426h8v8h-8z"/><path fill="#fefefe" d="M394 162h8v8h-8zM418 210h8v8h-8zM370 258h8v8h-8zM418 258h8v8h-8zM274 410h8v8h-8zM290 418h8v8h-8zM298 426h8v8h-8zM306 434h8v8h-8zM306 442h8v8h-8z"/><path fill="#ffffff" d="M402 162h8v8h-8zM378 170h40v8h-40zM370 178h48v8h-48zM370 186h48v8h-48zM370 194h48v8h-48zM370 202h48v8h-48zM370 210h48v8h-48zM370 218h56v8h-56zM370 226h56v8h-56zM370 234h56v8h-56zM370 242h56v8h-56zM370 250h56v8h-56zM378 258h40v8h-40zM378 266h40v8h-40zM378 274h32v8h-32zM218 410h56v8h-56zM218 418h72v8h-72zM218 426h80v8h-80zM218 434h88v8h-88zM218 442h88v8h-88zM218 450h96v8h-96z"/></g></g></svg>
<svg class="b" style="left:0.00px;top:0.00px;" width="1024" height="487" viewBox="0 0 1024 487"><path d="M377 179.3L386.5 172.3H490.3V186.4H386.5Z" fill="#d23a0b"/><circle cx="375.2" cy="179" r="1.7" fill="#9aa0a0"/><path d="M709.7 329.9L719.9 323H819.8V336.9H719.9Z" fill="#4769e0"/><circle cx="707.8" cy="330" r="1.7" fill="#8a8f98"/></svg>
<span class="t" style="left:388.60px;top:174.41px;font-size:9.80px;color:#1c0a04;letter-spacing:-0.354px;font-weight:bold;">MAX: 3.74597e+07 Pa</span>
<span class="t" style="left:720.60px;top:324.91px;font-size:9.80px;color:#fff;letter-spacing:-0.270px;font-weight:bold;">MIN: 5.39849e+03 Pa</span>
<div class="b" style="left:234.00px;top:0.00px;width:790.00px;height:44.50px;background:#303030;"></div>
<div class="b" style="left:234.00px;top:44.50px;width:790.00px;height:0.80px;background:#bdbdbd;"></div>
<svg class="b" style="left:0.00px;top:0.00px;" width="1024" height="487" viewBox="0 0 1024 487"><g stroke="#eee" stroke-width="0.9" fill="none"><path d="M247.5 8.6H262.6L247.5 24.2H262.6L247.5 8.6M246.5 16.4H263.5"/><g stroke="#c8c8c8" stroke-width="0.8" stroke-dasharray="1.1 0.7"><path d="M244.9 9.4V6.3H248M262.6 6.3H265.7V9.4M244.9 23.2V26.3H248M262.6 26.3H265.7V23.2"/></g></g><g transform="translate(275 4.7)" stroke="#e4e4e4" stroke-width="0.7" fill="none"><path d="M0 0.3H15.6"/><path d="M0 8.2H15.6"/><path d="M0 16.1H15.6"/><path d="M1.2 4.2H14.4" stroke-width="0.5"/><path d="M1.2 12.2H14.4" stroke-width="0.5"/><path d="M1 0.3L6.8 8.2M6.8 0.3L1 8.2"/><path d="M1 8.2L6.8 16.1M6.8 8.2L1 16.1"/><path d="M8.8 0.3L14.6 8.2M14.6 0.3L8.8 8.2"/><path d="M8.8 8.2L14.6 16.1M14.6 8.2L8.8 16.1"/></g><g transform="translate(305.8 4.7)" stroke="#e4e4e4" stroke-width="0.7" fill="none"><path d="M0 0.3H15.6"/><path d="M0 8.2H15.6"/><path d="M0 16.1H15.6"/><path d="M1.2 4.2H14.4" stroke-width="0.5"/><path d="M1.2 12.2H14.4" stroke-width="0.5"/><path d="M1 0.3L6.8 8.2M6.8 0.3L1 8.2"/><path d="M1 8.2L6.8 16.1M6.8 8.2L1 16.1"/><path d="M8.8 0.3L14.6 8.2M14.6 0.3L8.8 8.2"/><path d="M8.8 8.2L14.6 16.1M14.6 8.2L8.8 16.1"/></g><g transform="translate(336.3 4.7)" stroke="#e4e4e4" stroke-width="0.7" fill="none"><path d="M0 0.3H15.6"/><path d="M0 8.2H15.6"/><path d="M0 16.1H15.6"/><path d="M1.2 4.2H14.4" stroke-width="0.5"/><path d="M1.2 12.2H14.4" stroke-width="0.5"/><path d="M1 0.3L6.8 8.2M6.8 0.3L1 8.2"/><path d="M1 8.2L6.8 16.1M6.8 8.2L1 16.1"/><path d="M8.8 0.3L14.6 8.2M14.6 0.3L8.8 8.2"/><path d="M8.8 8.2L14.6 16.1M14.6 8.2L8.8 16.1"/></g><g transform="translate(367 4.7)" stroke="#e4e4e4" stroke-width="0.7" fill="none"><path d="M0 0.3H15.6"/><path d="M0 8.2H15.6"/><path d="M0 16.1H15.6"/><path d="M1.2 4.2H14.4" stroke-width="0.5"/><path d="M1.2 12.2H14.4" stroke-width="0.5"/><path d="M1 0.3L6.8 8.2M6.8 0.3L1 8.2"/><path d="M1 8.2L6.8 16.1M6.8 8.2L1 16.1"/><path d="M8.8 0.3L14.6 8.2M14.6 0.3L8.8 8.2"/><path d="M8.8 8.2L14.6 16.1M14.6 8.2L8.8 16.1"/></g><g transform="translate(397.6 4.7)" stroke="#e4e4e4" stroke-width="0.7" fill="none"><path d="M0 0.3H15.6"/><path d="M0 8.2H15.6"/><path d="M0 16.1H15.6"/><path d="M1.2 4.2H14.4" stroke-width="0.5"/><path d="M1.2 12.2H14.4" stroke-width="0.5"/><path d="M1 0.3L6.8 8.2M6.8 0.3L1 8.2"/><path d="M1 8.2L6.8 16.1M6.8 8.2L1 16.1"/><path d="M8.8 0.3L14.6 8.2M14.6 0.3L8.8 8.2"/><path d="M8.8 8.2L14.6 16.1M14.6 8.2L8.8 16.1"/></g><g transform="translate(459 4.7)" stroke="#e4e4e4" stroke-width="0.7" fill="none"><path d="M0 0.3H15.6"/><path d="M0 8.2H15.6"/><path d="M0 16.1H15.6"/><path d="M1.2 4.2H14.4" stroke-width="0.5"/><path d="M1.2 12.2H14.4" stroke-width="0.5"/><path d="M1 0.3L6.8 8.2M6.8 0.3L1 8.2"/><path d="M1 8.2L6.8 16.1M6.8 8.2L1 16.1"/><path d="M8.8 0.3L14.6 8.2M14.6 0.3L8.8 8.2"/><path d="M8.8 8.2L14.6 16.1M14.6 8.2L8.8 16.1"/></g><g transform="translate(489.4 4.7)" stroke="#e4e4e4" stroke-width="0.7" fill="none"><path d="M0 0.3H15.6"/><path d="M0 8.2H15.6"/><path d="M0 16.1H15.6"/><path d="M1.2 4.2H14.4" stroke-width="0.5"/><path d="M1.2 12.2H14.4" stroke-width="0.5"/><path d="M1 0.3L6.8 8.2M6.8 0.3L1 8.2"/><path d="M1 8.2L6.8 16.1M6.8 8.2L1 16.1"/><path d="M8.8 0.3L14.6 8.2M14.6 0.3L8.8 8.2"/><path d="M8.8 8.2L14.6 16.1M14.6 8.2L8.8 16.1"/></g><path d="M287 20L295 20L297 27L285 27Z" fill="#777" stroke="#ddd" stroke-width="0.7"/><path d="M286 23.5H296.5" stroke="#ddd" stroke-width="0.4"/><path d="M316 24L319 18L326 17L327 23L321 23L320 26Z" fill="#8a8a8a" stroke="#cfcfcf" stroke-width="0.6"/><g stroke="#ddd" stroke-width="0.7" fill="#555"><path d="M351 17.5V25.5A3.2 1.3 0 0 0 357.4 25.5V17.5"/><ellipse cx="354.2" cy="17.5" rx="3.2" ry="1.3"/><path d="M354.2 15V27.5" stroke-width="0.4"/></g><path d="M379 20.5L383.5 18L388.5 19.5V24.5L384 27L379 25.2Z" fill="#f2f2f2" stroke="#999" stroke-width="0.5"/><path d="M379 20.5L384 22L388.5 19.5M384 22V27" stroke="#999" stroke-width="0.5" fill="none"/><path d="M409.5 19.5L414 17L418.2 18.5V23.5L414 26L409.5 24.5Z" fill="#bdbdbd" stroke="#d8d8d8" stroke-width="0.5"/><path d="M409.5 19.5L414 21L418.2 18.5M414 21V26" stroke="#e5e5e5" stroke-width="0.5" fill="none"/><g stroke="#ddd" stroke-width="0.8" fill="none"><rect x="427.8" y="5.2" width="16.2" height="16"/><path d="M433 5.2L434.5 9L431 12L427.8 11M434.5 9L439 8L440.5 5.2M439 8L441.5 11.5L444 11M441.5 11.5L439.5 15.5L435 15.5L431 12M435 15.5L433.5 21.2M439.5 15.5L441.5 21.2M431 12L430 17L427.8 18M430 17L433.5 19"/></g><g stroke="#ddd" stroke-width="0.6" fill="#777"><path d="M439.3 25.6V18.6Q444.7 15.2 450.1 18.6V25.6H447.3V22.5Q444.7 20.5 442.1 22.5V25.6Z"/><path d="M439.8 20H449.6M439.3 22.5H450.1" stroke-width="0.4"/></g><g stroke="#ddd" stroke-width="0.6" fill="#777"><path d="M469.8 25.6V18.6Q475.2 15.2 480.6 18.6V25.6H477.8V22.5Q475.2 20.5 472.6 22.5V25.6Z"/><path d="M470.3 20H480.1M469.8 22.5H480.6" stroke-width="0.4"/></g><g stroke="#ddd" stroke-width="0.8" fill="#303030"><path d="M502.3 25.2L509.3 18"/><circle cx="501.8" cy="25.6" r="1.1"/><circle cx="509.8" cy="17.6" r="1.1"/></g><ellipse cx="531.2" cy="17.8" rx="10.8" ry="5.6" fill="#a4a4a4" stroke="#d2d2d2" stroke-width="0.8"/><ellipse cx="531.2" cy="17" rx="8.4" ry="3.9" fill="#606060"/><path d="M523.4 8.6L528.2 7L531.2 10L534.2 7L539 8.6V15.8L534.2 17.8L531.2 15.4L528.2 17.8L523.4 15.8Z" fill="#3f86e8"/><path d="M523.4 8.6L528.2 10.6L531.2 13L534.2 10.6L539 8.6L534.2 7L531.2 10L528.2 7Z" fill="#5a9cf2"/><path d="M525.8 9.8V16.8M528.2 10.6V17.8M534.2 10.6V17.8M536.6 9.8V16.8" stroke="#2a63c0" stroke-width="0.5"/><path d="M531.2 26.2V20.8M528.8 22.8L531.2 20L533.6 22.8" stroke="#fff" stroke-width="1.3" fill="none" stroke-linejoin="round"/><path d="M548.6 2.3V33.6" stroke="#484848" stroke-width="0.8"/><path d="M565.6 11.8Q566.6 15.2 570 16.2Q566.6 17.2 565.6 20.6Q564.6 17.2 561.2 16.2Q564.6 15.2 565.6 11.8Z" fill="#3f86e8"/><path d="M559.6 10.4Q564 13 565.6 16.2Q567.2 13 571.6 10.4Q568.8 14.6 565.6 16.2Q568.8 17.8 571.6 22Q567.2 19.4 565.6 16.2Q564 19.4 559.6 22Q562.4 17.8 565.6 16.2Q562.4 14.6 559.6 10.4Z" fill="#3f86e8" stroke="#3f86e8" stroke-width="1.2" stroke-linejoin="round"/><g stroke="#e8e8e8" stroke-width="0.8" fill="#303030"><path d="M556.6 7.5L574.6 25M574.6 7.5L556.6 25"/><circle cx="556.6" cy="7.5" r="1.3"/><circle cx="574.6" cy="7.5" r="1.3"/><circle cx="556.6" cy="25" r="1.3"/><circle cx="574.6" cy="25" r="1.3"/><circle cx="565.6" cy="16.2" r="0.9" fill="#fff"/></g><g stroke="#4a90f0" stroke-width="1.1" fill="#4a90f0"><path d="M588 11H592M605 11H601"/><path d="M594.1 11l-2.4 -1.7v3.4zM598.9 11l2.4 -1.7v3.4z" stroke="none"/></g><g stroke="#e8e8e8" stroke-width="0.8" fill="#303030"><path d="M587 23L592 16.2L596.3 15.2L601 16.2L606.2 23" fill="none"/><path d="M587 23L596.3 15.2L606.2 23" fill="none" stroke-width="0.6"/><circle cx="587" cy="23" r="1.3"/><circle cx="592.1" cy="16.1" r="1.2" fill="#888"/><circle cx="596.3" cy="15.2" r="1.2"/><circle cx="601" cy="16.1" r="1.2" fill="#888"/><circle cx="606.2" cy="23" r="1.3"/></g><g stroke="#4a90f0" stroke-width="1.1" fill="#4a90f0"><path d="M618 12.2H622M635 12.2H631"/><path d="M624.1 12.2l-2.4 -1.7v3.4zM628.9 12.2l2.4 -1.7v3.4z" stroke="none"/></g><g stroke="#e8e8e8" stroke-width="0.8" fill="#303030"><path d="M617.4 22.2H635M617.4 22.2L623 16.9H630.4L635 22.2" fill="none"/><circle cx="617.4" cy="22.2" r="1.3"/><circle cx="635" cy="22.2" r="1.3"/><circle cx="623" cy="16.9" r="1.2" fill="#888"/><circle cx="630.4" cy="16.9" r="1.2" fill="#888"/></g><g stroke="#e8e8e8" stroke-width="0.8" fill="none"><path d="M646.6 14V22.5L652.5 27.5L661.5 25V16.5M646.6 14L652.5 17.5V27.5M652.5 17.5L661.5 16.5"/><path d="M646.6 14L655.5 12L661.5 16.5M655.5 12V20.5L661.5 25M655.5 20.5L646.6 22.5" stroke="#e0461f" stroke-dasharray="1.4 1"/></g><g fill="#e8e8e8"><circle cx="646.6" cy="14" r="0.9"/><circle cx="646.6" cy="22.5" r="0.9"/><circle cx="652.5" cy="27.5" r="0.9"/><circle cx="661.5" cy="25" r="0.9"/><circle cx="652.5" cy="17.5" r="0.9"/></g><g fill="#e0461f"><circle cx="655.5" cy="12" r="1"/><circle cx="661.5" cy="16.5" r="1"/><circle cx="655.5" cy="20.5" r="0.8"/></g><g stroke="#e8e8e8" stroke-width="0.8" fill="none"><path d="M660.5 11.5L668.5 7.5M663 6L666 14"/><circle cx="669.3" cy="8.2" r="1.3"/><circle cx="665.2" cy="5.5" r="1.3"/></g><g stroke="#e0e0e0" stroke-width="0.7" fill="none" transform="translate(677.5 4.7)"><path d="M0 2.2L3.2 0L8.2 1.4V7L5 9.4L0 7.8ZM0 2.2L5 3.6L8.2 1.4M5 3.6V9.4"/><path d="M3.2 0V5.6L0 7.8M3.2 5.6L8.2 7" stroke-width="0.4"/></g><g stroke="#e0e0e0" stroke-width="0.7" fill="none" transform="translate(677.5 17.6)"><path d="M0 2.2L3.2 0L8.2 1.4V7L5 9.4L0 7.8ZM0 2.2L5 3.6L8.2 1.4M5 3.6V9.4"/><path d="M3.2 0V5.6L0 7.8M3.2 5.6L8.2 7" stroke-width="0.4"/></g><path d="M687 9.4Q691.5 10 692.3 16.3Q691.5 22.6 687 23.2M692.3 16.3H697" stroke="#29b6e8" stroke-width="1.2" fill="none"/><path d="M699.8 16.3l-3.2 -2.1v4.2z" fill="#29b6e8"/></svg>
<span class="t" style="left:377.60px;top:35.09px;font-size:7.40px;color:#d4d4d4;letter-spacing:-0.042px;">Create</span>
<span class="t" style="left:610.80px;top:35.09px;font-size:7.40px;color:#d4d4d4;letter-spacing:0.181px;">Modify</span>
<svg class="b" style="left:0.00px;top:0.00px;" width="1024" height="487" viewBox="0 0 1024 487"><path d="M404.7 37.4h4.2l-2.1 2.3zM639.2 37.4h4.2l-2.1 2.3z" fill="#e0e0e0"/></svg>
<div class="b" style="left:0.00px;top:0.00px;width:234.80px;height:487.00px;background:#282828;"></div>
<div class="b" style="left:234.80px;top:0.00px;width:0.80px;height:44.50px;background:#222;"></div>
<div class="b" style="left:18.00px;top:44.00px;width:212.00px;height:5.60px;background:#363636;"></div>
<div class="b" style="left:18.00px;top:44.00px;width:60.50px;height:5.60px;background:#26788f;border-left:1px solid #4cc3e6;"></div>
<svg class="b" style="left:0.00px;top:0.00px;" width="1024" height="487" viewBox="0 0 1024 487"><path d="M9.3 44.5l1.2 0.9l-1.2 0.6z" fill="#4cc3e6"/><circle cx="102.5" cy="45" r="0.5" fill="#62caf2"/><path d="M220 44.3a2.4 2.4 0 0 0 4.4 0z" fill="#ddd"/></svg>
<div class="b" style="left:0.00px;top:43.60px;width:234.30px;height:0.80px;background:#1d1d1d;"></div>
<div class="b" style="left:18.00px;top:57.00px;width:211.80px;height:14.20px;background:#363636;"></div>
<div class="b" style="left:18.00px;top:57.00px;width:79.00px;height:14.20px;background:#26788f;border-left:1px solid #4cc3e6;"></div>
<span class="t" style="left:41.30px;top:60.73px;font-size:6.90px;color:#fff;letter-spacing:-0.308px;font-weight:bold;">FE COMPONENT</span>
<span class="t" style="left:102.30px;top:60.73px;font-size:6.90px;color:#62caf2;letter-spacing:-0.037px;">FE Component</span>
<div class="b" style="left:18.00px;top:78.40px;width:211.80px;height:32.00px;background:#212121;border:1px solid #383838;border-bottom:none;border-radius:2.5px 2.5px 0 0;"></div>
<span class="t" style="left:34.00px;top:84.58px;font-size:7.20px;color:#fff;letter-spacing:0.099px;">FE Model</span>
<div class="b" style="left:18.00px;top:96.20px;width:211.80px;height:14.10px;background:#363636;"></div>
<div class="b" style="left:18.00px;top:96.20px;width:59.50px;height:14.10px;background:#26788f;border-left:1px solid #4cc3e6;"></div>
<span class="t" style="left:41.30px;top:99.93px;font-size:6.90px;color:#fff;letter-spacing:-0.450px;font-weight:bold;">FE MODEL</span>
<span class="t" style="left:83.00px;top:99.93px;font-size:6.90px;color:#62caf2;letter-spacing:-0.075px;">FE Model</span>
<div class="b" style="left:18.00px;top:116.80px;width:211.80px;height:54.00px;background:#212121;border:1px solid #383838;border-bottom:none;border-radius:2.5px 2.5px 0 0;"></div>
<span class="t" style="left:34.00px;top:123.98px;font-size:7.20px;color:#fff;letter-spacing:0.180px;">Force Face for boundary selection</span>
<div class="b" style="left:18.00px;top:136.20px;width:211.80px;height:13.60px;background:#363636;"></div>
<div class="b" style="left:18.00px;top:136.20px;width:61.00px;height:13.60px;background:#866a17;border-left:1px solid #d9b02c;"></div>
<span class="t" style="left:41.00px;top:139.63px;font-size:6.90px;color:#fff;letter-spacing:-0.043px;">Force Face</span>
<div class="b" style="left:95.60px;top:137.80px;width:105.20px;height:10.60px;background:#292929;"></div>
<div class="b" style="left:95.60px;top:137.80px;width:89.60px;height:10.60px;background:#8a6c17;border-left:1px solid #d9b02c;"></div>
<span class="t" style="left:100.50px;top:139.68px;font-size:7.20px;color:#fff;letter-spacing:0.122px;">Part_0.bodies[0].fa...</span>
<div class="b" style="left:18.00px;top:157.40px;width:211.80px;height:13.60px;background:#363636;"></div>
<div class="b" style="left:18.00px;top:157.40px;width:60.40px;height:13.60px;background:#866a17;border-left:1px solid #d9b02c;"></div>
<span class="t" style="left:41.00px;top:160.83px;font-size:6.90px;color:#fff;letter-spacing:-0.036px;">Fixed Face</span>
<div class="b" style="left:95.60px;top:159.00px;width:105.20px;height:10.60px;background:#292929;"></div>
<div class="b" style="left:95.60px;top:159.00px;width:87.50px;height:10.60px;background:#8a6c17;border-left:1px solid #d9b02c;"></div>
<span class="t" style="left:100.50px;top:160.88px;font-size:7.20px;color:#fff;letter-spacing:0.036px;">CAD BODY.faces[15]</span>
<div class="b" style="left:18.00px;top:178.30px;width:211.80px;height:53.00px;background:#212121;border:1px solid #383838;border-bottom:none;border-radius:2.5px 2.5px 0 0;"></div>
<span class="t" style="left:34.00px;top:184.08px;font-size:7.20px;color:#fff;letter-spacing:0.192px;">Boundary Conditions</span>
<div class="b" style="left:18.00px;top:196.80px;width:211.80px;height:13.40px;background:#363636;"></div>
<div class="b" style="left:18.00px;top:196.80px;width:44.30px;height:13.40px;background:#26788f;border-left:1px solid #4cc3e6;"></div>
<span class="t" style="left:41.00px;top:200.13px;font-size:6.90px;color:#fff;letter-spacing:-0.009px;">Force</span>
<span class="t" style="left:67.60px;top:200.13px;font-size:6.90px;color:#62caf2;letter-spacing:-0.059px;">Force</span>
<div class="b" style="left:18.00px;top:217.00px;width:211.80px;height:14.20px;background:#363636;"></div>
<div class="b" style="left:18.00px;top:217.00px;width:55.00px;height:14.20px;background:#26788f;border-left:1px solid #4cc3e6;"></div>
<span class="t" style="left:41.00px;top:220.83px;font-size:6.90px;color:#fff;letter-spacing:0.111px;">Restraint</span>
<span class="t" style="left:78.30px;top:220.83px;font-size:6.90px;color:#62caf2;letter-spacing:0.080px;">Displacement Restraint</span>
<div class="b" style="left:18.00px;top:239.40px;width:211.80px;height:39.00px;background:#212121;border:1px solid #383838;border-bottom:none;border-radius:2.5px 2.5px 0 0;"></div>
<span class="t" style="left:34.00px;top:245.28px;font-size:7.20px;color:#f4f4f4;letter-spacing:0.169px;">Add a Static Analysis Block. Insert the FE Model</span>
<span class="t" style="left:34.00px;top:255.78px;font-size:7.20px;color:#f4f4f4;letter-spacing:0.172px;">and select the + in the Boundary Condition List to</span>
<span class="t" style="left:34.00px;top:266.08px;font-size:7.20px;color:#5c5c5c;letter-spacing:0.175px;">add another input. Insert both the Force and</span>
<div class="b" style="left:18.00px;top:278.30px;width:211.80px;height:13.50px;background:#363636;"></div>
<div class="b" style="left:18.00px;top:278.30px;width:95.50px;height:13.50px;background:#26788f;border-left:1px solid #4cc3e6;"></div>
<span class="t" style="left:41.00px;top:281.63px;font-size:6.90px;color:#fff;letter-spacing:-0.199px;font-weight:bold;">Static Analysis Resu...</span>
<span class="t" style="left:119.30px;top:281.63px;font-size:6.90px;color:#62caf2;letter-spacing:0.108px;">Static Analysis</span>
<div class="b" style="left:18.00px;top:291.80px;width:211.80px;height:14.60px;background:#303030;border-left:1px solid #4cc3e6;"></div>
<span class="t" style="left:50.00px;top:295.98px;font-size:7.00px;color:#e4e4e4;letter-spacing:-0.002px;">Model:</span>
<div class="b" style="left:123.80px;top:293.80px;width:90.60px;height:11.00px;background:#292929;"></div>
<div class="b" style="left:123.80px;top:294.20px;width:55.00px;height:10.40px;background:#26788f;border-left:1px solid #4cc3e6;"></div>
<span class="t" style="left:129.50px;top:295.98px;font-size:7.20px;color:#fff;letter-spacing:-0.258px;">FE MODEL</span>
<div class="b" style="left:31.80px;top:306.60px;width:212.40px;height:44.20px;background:#383838;box-shadow:0 1px 4px rgba(0,0,0,.7);border-left:1.2px solid #4cc3e6;"></div>
<div class="b" style="left:18.00px;top:306.40px;width:14.00px;height:44.40px;background:#2c2c2c;border-left:1px solid #4cc3e6;"></div>
<div class="b" style="left:33.00px;top:306.60px;width:211.20px;height:15.20px;background:#3b3b3b;"></div>
<span class="t" style="left:55.50px;top:310.78px;font-size:7.00px;color:#e4e4e4;letter-spacing:-0.200px;">Load Case:</span>
<span class="t" style="left:95.80px;top:311.18px;font-size:6.80px;color:#62caf2;letter-spacing:0.036px;">Boundary Condi...</span>
<span class="t" style="left:157.00px;top:311.18px;font-size:6.60px;color:#62caf2;letter-spacing:-0.085px;font-style:italic;">Boundary Con...</span>
<span class="t" style="left:64.60px;top:324.68px;font-size:7.00px;color:#e4e4e4;">0:</span>
<div class="b" style="left:137.80px;top:322.70px;width:90.60px;height:10.80px;background:#292929;"></div>
<div class="b" style="left:137.80px;top:322.90px;width:37.80px;height:10.40px;background:#26788f;border-left:1px solid #4cc3e6;"></div>
<span class="t" style="left:143.30px;top:324.68px;font-size:7.20px;color:#fff;letter-spacing:0.049px;">Force</span>
<span class="t" style="left:64.60px;top:338.68px;font-size:7.00px;color:#e4e4e4;">1:</span>
<div class="b" style="left:137.80px;top:336.70px;width:90.60px;height:10.80px;background:#292929;"></div>
<div class="b" style="left:137.80px;top:336.90px;width:49.30px;height:10.40px;background:#26788f;border-left:1px solid #4cc3e6;"></div>
<span class="t" style="left:143.30px;top:338.68px;font-size:7.20px;color:#fff;letter-spacing:0.186px;">Restraint</span>
<div class="b" style="left:18.20px;top:358.40px;width:211.80px;height:98.00px;background:#313131;border-left:1.2px solid #a6cf47;"></div>
<div class="b" style="left:19.40px;top:358.40px;width:210.60px;height:13.40px;background:#343434;"></div>
<div class="b" style="left:19.40px;top:371.60px;width:210.60px;height:0.70px;background:#3d3d3d;"></div>
<span class="t" style="left:36.00px;top:361.83px;font-size:6.90px;color:#9bc53d;letter-spacing:-0.335px;">Ramp</span>
<span class="t" style="left:159.00px;top:362.03px;font-size:6.70px;color:#9bc53d;letter-spacing:-0.063px;font-style:italic;">Scalar Field_0</span>
<span class="t" style="left:50.00px;top:376.08px;font-size:7.00px;color:#e4e4e4;letter-spacing:0.008px;">Scalar Field:</span>
<div class="b" style="left:123.80px;top:373.80px;width:90.80px;height:11.40px;background:#292929;"></div>
<div class="b" style="left:123.80px;top:374.00px;width:78.20px;height:11.00px;background:#65832a;border-left:1px solid #a6cf47;"></div>
<span class="t" style="left:129.40px;top:376.08px;font-size:7.20px;color:#fff;letter-spacing:0.143px;">Static Analysis ...</span>
<span class="t" style="left:218.00px;top:376.98px;font-size:6.60px;color:#868686;letter-spacing:-0.073px;">Pa</span>
<span class="t" style="left:50.00px;top:390.58px;font-size:7.00px;color:#e4e4e4;letter-spacing:0.082px;">In Min:</span>
<div class="b" style="left:123.80px;top:388.30px;width:90.80px;height:11.40px;background:#292929;"></div>
<span class="t" style="left:127.40px;top:390.08px;font-size:7.20px;color:#f0f0f0;letter-spacing:0.196px;">5.39849e+03</span>
<span class="t" style="left:218.00px;top:391.48px;font-size:6.60px;color:#868686;letter-spacing:-0.073px;">Pa</span>
<span class="t" style="left:50.00px;top:404.58px;font-size:7.00px;color:#e4e4e4;letter-spacing:0.008px;">In Max:</span>
<div class="b" style="left:123.80px;top:402.30px;width:90.80px;height:11.40px;background:#292929;"></div>
<span class="t" style="left:127.40px;top:404.08px;font-size:7.20px;color:#f0f0f0;letter-spacing:0.196px;">3.74597e+07</span>
<span class="t" style="left:218.00px;top:405.48px;font-size:6.60px;color:#868686;letter-spacing:-0.073px;">Pa</span>
<span class="t" style="left:50.00px;top:418.88px;font-size:7.00px;color:#e4e4e4;letter-spacing:-0.064px;">Out Min:</span>
<div class="b" style="left:123.80px;top:416.60px;width:90.80px;height:11.40px;background:#292929;"></div>
<span class="t" style="left:127.40px;top:418.38px;font-size:7.20px;color:#f0f0f0;letter-spacing:0.334px;">1 mm</span>
<span class="t" style="left:216.80px;top:419.78px;font-size:6.60px;color:#868686;letter-spacing:0.005px;">mm</span>
<span class="t" style="left:50.00px;top:432.78px;font-size:7.00px;color:#e4e4e4;letter-spacing:-0.128px;">Out Max:</span>
<div class="b" style="left:123.80px;top:430.50px;width:90.80px;height:11.40px;background:#292929;"></div>
<span class="t" style="left:127.40px;top:432.28px;font-size:7.20px;color:#f0f0f0;letter-spacing:0.334px;">5 mm</span>
<span class="t" style="left:216.80px;top:433.68px;font-size:6.60px;color:#868686;letter-spacing:0.005px;">mm</span>
<span class="t" style="left:50.00px;top:446.98px;font-size:7.00px;color:#e4e4e4;letter-spacing:0.093px;">Continuity:</span>
<div class="b" style="left:123.80px;top:444.70px;width:90.80px;height:11.40px;background:#292929;"></div>
<span class="t" style="left:127.40px;top:446.48px;font-size:7.20px;color:#f0f0f0;letter-spacing:0.153px;">Geometric (C0)</span>
<div class="b" style="left:0.00px;top:464.00px;width:234.30px;height:0.80px;background:#3a3a3a;"></div>
<span class="t" style="left:18.40px;top:470.48px;font-size:7.20px;color:#9a9a9a;letter-spacing:0.158px;">New Section</span>
<div class="b" style="left:0.00px;top:482.00px;width:234.30px;height:0.80px;background:#3a3a3a;"></div>
<div class="b" style="left:0.00px;top:482.80px;width:234.30px;height:4.20px;background:#242424;"></div>
<div class="b" style="left:2.00px;top:206.00px;width:2.40px;height:256.00px;background:#3a3a3a;border-radius:1px;"></div>
<span class="t" style="left:23.40px;top:9.29px;font-size:11.90px;color:#ececec;letter-spacing:0.277px;">Static Analysis</span>
<div class="b" style="left:20.30px;top:26.60px;width:182.50px;height:13.40px;background:#171717;"></div>
<span class="t" style="left:36.00px;top:29.79px;font-size:7.40px;color:#6e6e6e;letter-spacing:0.054px;">Add Block... (Ctrl+L)</span>
<svg class="b" style="left:0.00px;top:0.00px;" width="1024" height="487" viewBox="0 0 1024 487"><path d="M9.6 60.4v7.6l4.6 -3.8z" fill="#4cc3e6"/><path d="M23.5 60.2q1.6 -1.2 3 0.2l0.3 4.2l1.8 1.6l-0.6 2.2l-2.6 -0.4l-1.6 -2.4z" fill="#e8e8e8"/><path d="M23.5 60.2l1.5 3l0.3 4.6" stroke="#999" stroke-width="0.5" fill="none"/><path d="M32.1 63.3l1.9 1.8l1.9 -1.8" stroke="#fff" stroke-width="1" fill="none"/><rect x="151.2" y="59.7" width="8.2" height="8.6" rx="1.3" fill="none" stroke="#8a8a8a" stroke-width="0.8"/><path d="M153.495 63.345l1.805 1.71l1.805 -1.71" stroke="#e8e8e8" stroke-width="1" fill="none"/><circle cx="211.5" cy="64" r="3.7" fill="#a2a2a2"/><text x="211.5" y="66" font-size="5.8" font-weight="bold" fill="#303030" text-anchor="middle" font-family="Liberation Sans, sans-serif">?</text><circle cx="222.1" cy="64" r="2.7" fill="none" stroke="#e2e2e2" stroke-width="1"/><path d="M9.6 99.6v7.6l4.6 -3.8z" fill="#4cc3e6"/><path d="M23 99.4l2.6 -0.6v5l-1.6 2.6l-1 -2.4zM26.4 98.8l2.4 0.8l-0.2 3.4l-1.2 1.6h-1z" fill="#ececec"/><circle cx="29" cy="101.2" r="1.3" fill="none" stroke="#ececec" stroke-width="0.7"/><path d="M32.1 102.5l1.9 1.8l1.9 -1.8" stroke="#fff" stroke-width="1" fill="none"/><circle cx="211.5" cy="103.2" r="3.7" fill="#a2a2a2"/><text x="211.5" y="105.2" font-size="5.8" font-weight="bold" fill="#303030" text-anchor="middle" font-family="Liberation Sans, sans-serif">?</text><circle cx="222.1" cy="103.2" r="2.7" fill="none" stroke="#e2e2e2" stroke-width="1"/><g stroke="#e2d6a8" stroke-width="0.7" fill="none"><rect x="23" y="140.6" width="6" height="6"/><path d="M23 140.6l1.6 -1.6h6v6l-1.6 1.6M26 140.6v6M23 143.6h6"/></g><path d="M32.1 142.1l1.9 1.8l1.9 -1.8" stroke="#fff" stroke-width="1" fill="none"/><path d="M177.7 141.2l3.8 3.8M181.5 141.2l-3.8 3.8" stroke="#e8e8e8" stroke-width="0.9"/><circle cx="211.5" cy="143.1" r="3.7" fill="#a2a2a2"/><text x="211.5" y="145.1" font-size="5.8" font-weight="bold" fill="#303030" text-anchor="middle" font-family="Liberation Sans, sans-serif">?</text><circle cx="222.1" cy="143.1" r="2.7" fill="none" stroke="#e2e2e2" stroke-width="1"/><g stroke="#e2d6a8" stroke-width="0.7" fill="none"><rect x="23" y="161.8" width="6" height="6"/><path d="M23 161.8l1.6 -1.6h6v6l-1.6 1.6M26 161.8v6M23 164.8h6"/></g><path d="M32.1 163.3l1.9 1.8l1.9 -1.8" stroke="#fff" stroke-width="1" fill="none"/><path d="M175.6 162.4l3.8 3.8M179.4 162.4l-3.8 3.8" stroke="#e8e8e8" stroke-width="0.9"/><circle cx="211.5" cy="164.3" r="3.7" fill="#a2a2a2"/><text x="211.5" y="166.3" font-size="5.8" font-weight="bold" fill="#303030" text-anchor="middle" font-family="Liberation Sans, sans-serif">?</text><circle cx="222.1" cy="164.3" r="2.7" fill="none" stroke="#e2e2e2" stroke-width="1"/><path d="M9.6 199.8v7.6l4.6 -3.8z" fill="#4cc3e6"/><rect x="22.4" y="200.3" width="7.6" height="6.6" fill="none" stroke="#d8d8d8" stroke-width="0.8"/><path d="M24 205.5l2.2 -2.6l2.2 2.6z" fill="#d8d8d8"/><path d="M32.1 202.7l1.9 1.8l1.9 -1.8" stroke="#fff" stroke-width="1" fill="none"/><rect x="88" y="199.2" width="8.2" height="8.6" rx="1.3" fill="none" stroke="#8a8a8a" stroke-width="0.8"/><path d="M90.295 202.845l1.805 1.71l1.805 -1.71" stroke="#e8e8e8" stroke-width="1" fill="none"/><circle cx="211.5" cy="203.5" r="3.7" fill="#a2a2a2"/><text x="211.5" y="205.5" font-size="5.8" font-weight="bold" fill="#303030" text-anchor="middle" font-family="Liberation Sans, sans-serif">?</text><circle cx="222.1" cy="203.5" r="2.7" fill="none" stroke="#e2e2e2" stroke-width="1"/><path d="M9.6 220.4v7.6l4.6 -3.8z" fill="#4cc3e6"/><rect x="22.4" y="220.9" width="7.6" height="6.6" fill="none" stroke="#d8d8d8" stroke-width="0.8"/><path d="M24 226.1l2.2 -2.6l2.2 2.6z" fill="#d8d8d8"/><path d="M32.1 223.4l1.9 1.8l1.9 -1.8" stroke="#fff" stroke-width="1" fill="none"/><rect x="154.3" y="219.9" width="8.2" height="8.6" rx="1.3" fill="none" stroke="#8a8a8a" stroke-width="0.8"/><path d="M156.595 223.545l1.805 1.71l1.805 -1.71" stroke="#e8e8e8" stroke-width="1" fill="none"/><circle cx="211.5" cy="224.2" r="3.7" fill="#a2a2a2"/><text x="211.5" y="226.2" font-size="5.8" font-weight="bold" fill="#303030" text-anchor="middle" font-family="Liberation Sans, sans-serif">?</text><circle cx="222.1" cy="224.2" r="2.7" fill="none" stroke="#e2e2e2" stroke-width="1"/><path d="M217.8 266.6l3.3 3l3.3 -3" stroke="#cfcfcf" stroke-width="0.9" fill="none"/><path d="M8 282.6h7.6l-3.8 4.6z" fill="#4cc3e6"/><path d="M22.2 283.2v2.4M23.8 282.2h6v4h-6zM26.8 286.2v1.8M24.6 288.2h4.4" stroke="#eaeaea" stroke-width="0.9" fill="none"/><rect x="24.2" y="282.6" width="5.2" height="3.2" fill="#eaeaea"/><path d="M32.1 284.3l1.9 1.8l1.9 -1.8" stroke="#fff" stroke-width="1" fill="none"/><circle cx="211.5" cy="285" r="3.7" fill="#a2a2a2"/><text x="211.5" y="287" font-size="5.8" font-weight="bold" fill="#303030" text-anchor="middle" font-family="Liberation Sans, sans-serif">?</text><circle cx="222.1" cy="285" r="2.8" fill="#f2f2f2"/><path d="M37 295.4l2.6 -0.6v5l-1.6 2.6l-1 -2.4zM40.4 294.8l2.4 0.8l-0.2 3.4l-1.2 1.6h-1z" fill="#ececec"/><circle cx="43" cy="297.2" r="1.3" fill="none" stroke="#ececec" stroke-width="0.7"/><path d="M171.1 297.5l3.8 3.8M174.9 297.5l-3.8 3.8" stroke="#e8e8e8" stroke-width="0.9"/><path d="M22.2 311.6h7.6l-3.8 4.6z" fill="#4cc3e6"/><rect x="35.4" y="310" width="7.6" height="6.6" fill="none" stroke="#d8d8d8" stroke-width="0.8"/><path d="M37 315.2l2.2 -2.6l2.2 2.6z" fill="#d8d8d8"/><path d="M37 318h6" stroke="#d8d8d8" stroke-width="0.7"/><path d="M46.1 313.3l1.9 1.8l1.9 -1.8" stroke="#fff" stroke-width="1" fill="none"/><path d="M212 314.2h6M215 311.2v6" stroke="#cfcfcf" stroke-width="0.9"/><circle cx="225.3" cy="314.2" r="3.7" fill="#a2a2a2"/><text x="225.3" y="316.2" font-size="5.8" font-weight="bold" fill="#303030" text-anchor="middle" font-family="Liberation Sans, sans-serif">?</text><circle cx="236" cy="314.2" r="2.7" fill="none" stroke="#e2e2e2" stroke-width="1"/><rect x="50.2" y="324.7" width="7.6" height="6.6" fill="none" stroke="#d8d8d8" stroke-width="0.8"/><path d="M51.8 329.9l2.2 -2.6l2.2 2.6z" fill="#d8d8d8"/><path d="M168.1 326.2l3.8 3.8M171.9 326.2l-3.8 3.8" stroke="#e8e8e8" stroke-width="0.9"/><rect x="50.2" y="338.7" width="7.6" height="6.6" fill="none" stroke="#d8d8d8" stroke-width="0.8"/><path d="M51.8 343.9l2.2 -2.6l2.2 2.6z" fill="#d8d8d8"/><path d="M179.6 340.2l3.8 3.8M183.4 340.2l-3.8 3.8" stroke="#e8e8e8" stroke-width="0.9"/><path d="M7.9 362.8h7.6l-3.8 4.6z" fill="#a6cf47"/><path d="M22.4 370a8.6 8.6 0 0 1 8.6 -8.6" fill="none" stroke="#c4c4c4" stroke-width="1"/><path d="M25.1 370a5.9 5.9 0 0 1 5.9 -5.9" fill="none" stroke="#c4c4c4" stroke-width="1"/><path d="M27.8 370a3.2 3.2 0 0 1 3.2 -3.2" fill="none" stroke="#c4c4c4" stroke-width="1"/><rect x="57.6" y="360.8" width="8.2" height="8.6" rx="1.3" fill="none" stroke="#8a8a8a" stroke-width="0.8"/><path d="M59.895 364.445l1.805 1.71l1.805 -1.71" stroke="#e8e8e8" stroke-width="1" fill="none"/><circle cx="211.5" cy="365.2" r="3.7" fill="#a2a2a2"/><text x="211.5" y="367.2" font-size="5.8" font-weight="bold" fill="#303030" text-anchor="middle" font-family="Liberation Sans, sans-serif">?</text><circle cx="222.1" cy="365.2" r="2.8" fill="#f2f2f2"/><path d="M36.4 383.9a8.6 8.6 0 0 1 8.6 -8.6" fill="none" stroke="#c4c4c4" stroke-width="1"/><path d="M39.1 383.9a5.9 5.9 0 0 1 5.9 -5.9" fill="none" stroke="#c4c4c4" stroke-width="1"/><path d="M41.8 383.9a3.2 3.2 0 0 1 3.2 -3.2" fill="none" stroke="#c4c4c4" stroke-width="1"/><path d="M194.4 377.6l3.8 3.8M198.2 377.6l-3.8 3.8" stroke="#e8e8e8" stroke-width="0.9"/><path d="M36.4 398.4a8.6 8.6 0 0 1 8.6 -8.6" fill="none" stroke="#c4c4c4" stroke-width="1"/><path d="M39.1 398.4a5.9 5.9 0 0 1 5.9 -5.9" fill="none" stroke="#c4c4c4" stroke-width="1"/><path d="M41.8 398.4a3.2 3.2 0 0 1 3.2 -3.2" fill="none" stroke="#c4c4c4" stroke-width="1"/><path d="M36.4 412.4a8.6 8.6 0 0 1 8.6 -8.6" fill="none" stroke="#c4c4c4" stroke-width="1"/><path d="M39.1 412.4a5.9 5.9 0 0 1 5.9 -5.9" fill="none" stroke="#c4c4c4" stroke-width="1"/><path d="M41.8 412.4a3.2 3.2 0 0 1 3.2 -3.2" fill="none" stroke="#c4c4c4" stroke-width="1"/><path d="M36.4 426.7a8.6 8.6 0 0 1 8.6 -8.6" fill="none" stroke="#c4c4c4" stroke-width="1"/><path d="M39.1 426.7a5.9 5.9 0 0 1 5.9 -5.9" fill="none" stroke="#c4c4c4" stroke-width="1"/><path d="M41.8 426.7a3.2 3.2 0 0 1 3.2 -3.2" fill="none" stroke="#c4c4c4" stroke-width="1"/><path d="M36.4 440.6a8.6 8.6 0 0 1 8.6 -8.6" fill="none" stroke="#c4c4c4" stroke-width="1"/><path d="M39.1 440.6a5.9 5.9 0 0 1 5.9 -5.9" fill="none" stroke="#c4c4c4" stroke-width="1"/><path d="M41.8 440.6a3.2 3.2 0 0 1 3.2 -3.2" fill="none" stroke="#c4c4c4" stroke-width="1"/><path d="M36 447.6h8.2M36 449.5h8.2M36 451.4h8.2M36 453.3h8.2" stroke="#d0d0d0" stroke-width="1"/><path d="M205.3 449.2h5.6l-2.8 3z" fill="#e8e8e8"/><path d="M8.4 474h5.8M11.3 471.1v5.8" stroke="#b0b0b0" stroke-width="0.9"/><path d="M24 33.4h7M27.5 29.9v7" stroke="#d8d8d8" stroke-width="0.9"/><g stroke="#c8c8c8" stroke-width="0.9" fill="none"><path d="M213.6 31.6a4.2 4.2 0 0 1 7.6 -0.6M221.4 35.2a4.2 4.2 0 0 1 -7.6 0.6"/></g><path d="M222.2 29.2v2.8h-2.8zM212.8 37.6v-2.8h2.8z" fill="#c8c8c8"/><text x="217.5" y="35.2" font-size="5" font-weight="bold" fill="#c8c8c8" text-anchor="middle" font-family="Liberation Sans, sans-serif">A</text></svg>
<div class="b" style="left:982.00px;top:66.00px;width:21.40px;height:22.00px;background:#efefee;border:0.6px solid #9a9a9a;"></div>
<span class="t" style="left:985.20px;top:74.56px;font-size:5.00px;color:#4a4a4a;letter-spacing:-0.655px;">FRONT</span>
<span class="t" style="left:979.00px;top:54.77px;font-size:6.00px;color:#2d8ec0;font-weight:bold;">Z</span>
<span class="t" style="left:1009.80px;top:85.67px;font-size:6.00px;color:#b5812a;font-weight:bold;">X</span>
<div class="b" style="left:880.10px;top:151.20px;width:117.80px;height:335.80px;background:#5c5c5c;"></div>
<div class="b" style="left:880.10px;top:151.20px;width:117.80px;height:13.90px;background:#2b2b2b;"></div>
<span class="t" style="left:883.60px;top:154.49px;font-size:8.00px;color:#fff;letter-spacing:-0.190px;">Static Analysis Result_1</span>
<span class="t" style="left:890.60px;top:175.19px;font-size:7.60px;color:#ececec;letter-spacing:0.029px;">Static Analysis</span>
<div class="b" style="left:888.80px;top:191.70px;width:99.70px;height:13.00px;background:#222;"></div>
<span class="t" style="left:892.00px;top:194.69px;font-size:7.60px;color:#f4f4f4;letter-spacing:-0.028px;">Stress</span>
<div class="b" style="left:888.80px;top:213.00px;width:99.70px;height:12.80px;background:#222;"></div>
<span class="t" style="left:892.00px;top:215.89px;font-size:7.60px;color:#f4f4f4;letter-spacing:0.068px;">Von Mises</span>
<span class="t" style="left:890.60px;top:235.59px;font-size:7.60px;color:#ececec;letter-spacing:0.018px;">Deformation Scale</span>
<div class="b" style="left:888.80px;top:249.00px;width:39.70px;height:13.60px;background:#222;"></div>
<span class="t" style="left:892.40px;top:252.29px;font-size:7.60px;color:#f4f4f4;">0</span>
<div class="b" style="left:888.80px;top:270.00px;width:99.70px;height:0.80px;background:#6a6a6a;"></div>
<div class="b" style="left:888.80px;top:299.80px;width:99.70px;height:13.50px;background:#222;"></div>
<span class="t" style="left:892.00px;top:303.04px;font-size:7.60px;color:#f4f4f4;letter-spacing:-0.054px;">Units: Pa</span>
<div class="b" style="left:930.70px;top:319.60px;width:58.20px;height:11.40px;background:#2b2b2b;"></div>
<span class="t" style="left:934.00px;top:321.94px;font-size:7.50px;color:#fff;letter-spacing:0.100px;">3.74597e+07</span>
<span class="t" style="left:934.00px;top:346.60px;font-size:7.50px;color:#ececec;letter-spacing:0.100px;">3.12173e+07</span>
<span class="t" style="left:934.00px;top:371.26px;font-size:7.50px;color:#ececec;letter-spacing:0.100px;">2.49749e+07</span>
<span class="t" style="left:934.00px;top:395.92px;font-size:7.50px;color:#ececec;letter-spacing:0.100px;">1.87326e+07</span>
<span class="t" style="left:934.00px;top:420.58px;font-size:7.50px;color:#ececec;letter-spacing:0.100px;">1.24902e+07</span>
<span class="t" style="left:934.00px;top:445.24px;font-size:7.50px;color:#ececec;letter-spacing:0.100px;">6.24778e+06</span>
<div class="b" style="left:930.70px;top:467.56px;width:58.20px;height:11.40px;background:#2b2b2b;"></div>
<span class="t" style="left:934.00px;top:469.90px;font-size:7.50px;color:#fff;letter-spacing:0.100px;">5.39849e+03</span>
<div class="b" style="left:1000.20px;top:216.10px;width:20.70px;height:67.50px;background:#2b2b2b;"></div>
<svg class="b" style="left:0.00px;top:0.00px;" width="1024" height="487" viewBox="0 0 1024 487"><path d="M980.7 62.2V88.6" stroke="#3b8de0" stroke-width="1.6"/><path d="M980 88.5H1007.2" stroke="#ee4a4a" stroke-width="1"/><rect x="1023" y="108.5" width="1.2" height="33.5" fill="#3c3c3c"/><rect x="1023" y="97.6" width="1.2" height="2" fill="#3b8de0"/><rect x="1023" y="72" width="1.2" height="1" fill="#999"/><path d="M987.9 157.2h5.8l-2.9 3.1z" fill="#f4f4f4"/><path d="M979.6 197h5.2l-2.6 2.8z" fill="#f0f0f0"/><path d="M979.6 218.2h5.2l-2.6 2.8z" fill="#f0f0f0"/><rect x="934" y="254.2" width="51.8" height="3.6" rx="1.8" fill="#0d2a60"/><circle cx="933.7" cy="256" r="4.1" fill="#2b7bff"/><path d="M902.86 283.71L902.86 286.29L900.97 286.64L900.99 286.58L902.08 288.16L900.26 289.98L898.68 288.89L898.74 288.87L898.39 290.76L895.81 290.76L895.46 288.87L895.52 288.89L893.94 289.98L892.12 288.16L893.21 286.58L893.23 286.64L891.34 286.29L891.34 283.71L893.23 283.36L893.21 283.42L892.12 281.84L893.94 280.02L895.52 281.11L895.46 281.13L895.81 279.24L898.39 279.24L898.74 281.13L898.68 281.11L900.26 280.02L902.08 281.84L900.99 283.42L900.97 283.36Z" fill="#c9c9c9"/><circle cx="897.1" cy="285" r="2" fill="#5c5c5c"/><path d="M917.6 280.4h6v1.3h-1v3.6l1.6 1.9v1h-7.2v-1l1.6 -1.9v-3.6h-1zM920.2 288.2h0.9v3l-0.45 0.7l-0.45 -0.7z" fill="#c9c9c9"/><rect x="936.5" y="278.2" width="15.4" height="13.8" rx="1" fill="#3a6fd0" stroke="#2b7bff" stroke-width="1.3"/><path d="M939 280.4h6.4l1.6 1.4v2.6l-1.6 1v1.6l1.8 1v2h-8.2z" fill="#1e1e1e"/><path d="M945.2 280.4h3.6v2.6h-2.4z" fill="#e8501e"/><path d="M946.4 287.2h2.6v2.4h-3.4z" fill="#3f86e8"/><path d="M979.6 305.35h5.2l-2.6 2.8z" fill="#f0f0f0"/><defs><linearGradient id="cb" x1="0" y1="0" x2="0" y2="1"><stop offset="0.000" stop-color="#7a0403"/><stop offset="0.042" stop-color="#9b0f01"/><stop offset="0.083" stop-color="#b91e02"/><stop offset="0.125" stop-color="#d02f05"/><stop offset="0.167" stop-color="#e4450a"/><stop offset="0.208" stop-color="#f26014"/><stop offset="0.250" stop-color="#fb7e21"/><stop offset="0.292" stop-color="#fe9e2f"/><stop offset="0.333" stop-color="#faba39"/><stop offset="0.375" stop-color="#eecf3a"/><stop offset="0.417" stop-color="#d9e436"/><stop offset="0.458" stop-color="#bef434"/><stop offset="0.500" stop-color="#a4fc3c"/><stop offset="0.542" stop-color="#80ff53"/><stop offset="0.583" stop-color="#55fa76"/><stop offset="0.625" stop-color="#32f298"/><stop offset="0.667" stop-color="#1ae4b6"/><stop offset="0.708" stop-color="#1ad2d2"/><stop offset="0.750" stop-color="#28bceb"/><stop offset="0.792" stop-color="#3ba0fd"/><stop offset="0.833" stop-color="#4685fa"/><stop offset="0.875" stop-color="#466be3"/><stop offset="0.917" stop-color="#434eba"/><stop offset="0.958" stop-color="#3b2f80"/><stop offset="1.000" stop-color="#30123b"/></linearGradient></defs><rect x="906.7" y="324.6" width="14.4" height="148.2" fill="url(#cb)" stroke="rgba(40,30,40,.35)" stroke-width="0.6"/><path d="M922 325.2H928.8" stroke="#fff" stroke-width="1.3"/><path d="M922 349.86H927" stroke="#fff" stroke-width="1.3"/><path d="M922 374.52H927" stroke="#fff" stroke-width="1.3"/><path d="M922 399.18H927" stroke="#fff" stroke-width="1.3"/><path d="M922 423.84H927" stroke="#fff" stroke-width="1.3"/><path d="M922 448.5H927" stroke="#fff" stroke-width="1.3"/><path d="M922 473.16H928.8" stroke="#fff" stroke-width="1.3"/><defs><linearGradient id="sg" x1="0" y1="0" x2="1" y2="1"><stop offset="0" stop-color="#2fd0f0"/><stop offset="0.45" stop-color="#2a55f0"/><stop offset="0.75" stop-color="#9a2ae0"/><stop offset="1" stop-color="#e83ad0"/></linearGradient></defs><rect x="1006.2" y="224.6" width="8.6" height="8.6" rx="1.2" fill="url(#sg)" stroke="#e8e8f8" stroke-width="0.9"/><rect x="1005.8" y="245.8" width="4.6" height="8.6" fill="#f2f2f2"/><path d="M1011 246.2l3.6 3.4M1011 248.8l3.6 3.4M1011 251.4l3 3M1012.6 245.8l2 2" stroke="#bdbdbd" stroke-width="0.9"/><path d="M1010.4 266.6l4.4 1.7v5.2l-4.4 2.2l-4.4 -2.2v-5.2z" fill="#f0f0f0"/><path d="M1010.4 267.3l3.7 1.4l-3.7 1.6l-3.7 -1.6z" fill="#f08a1c"/><path d="M1006.6 269.3l3.5 1.5v4.3l-3.5 -1.8z" fill="#2e9a4a"/><path d="M1014.2 269.3l-3.5 1.5v4.3l3.5 -1.8z" fill="#d83a2a"/></svg>
</body></html>
